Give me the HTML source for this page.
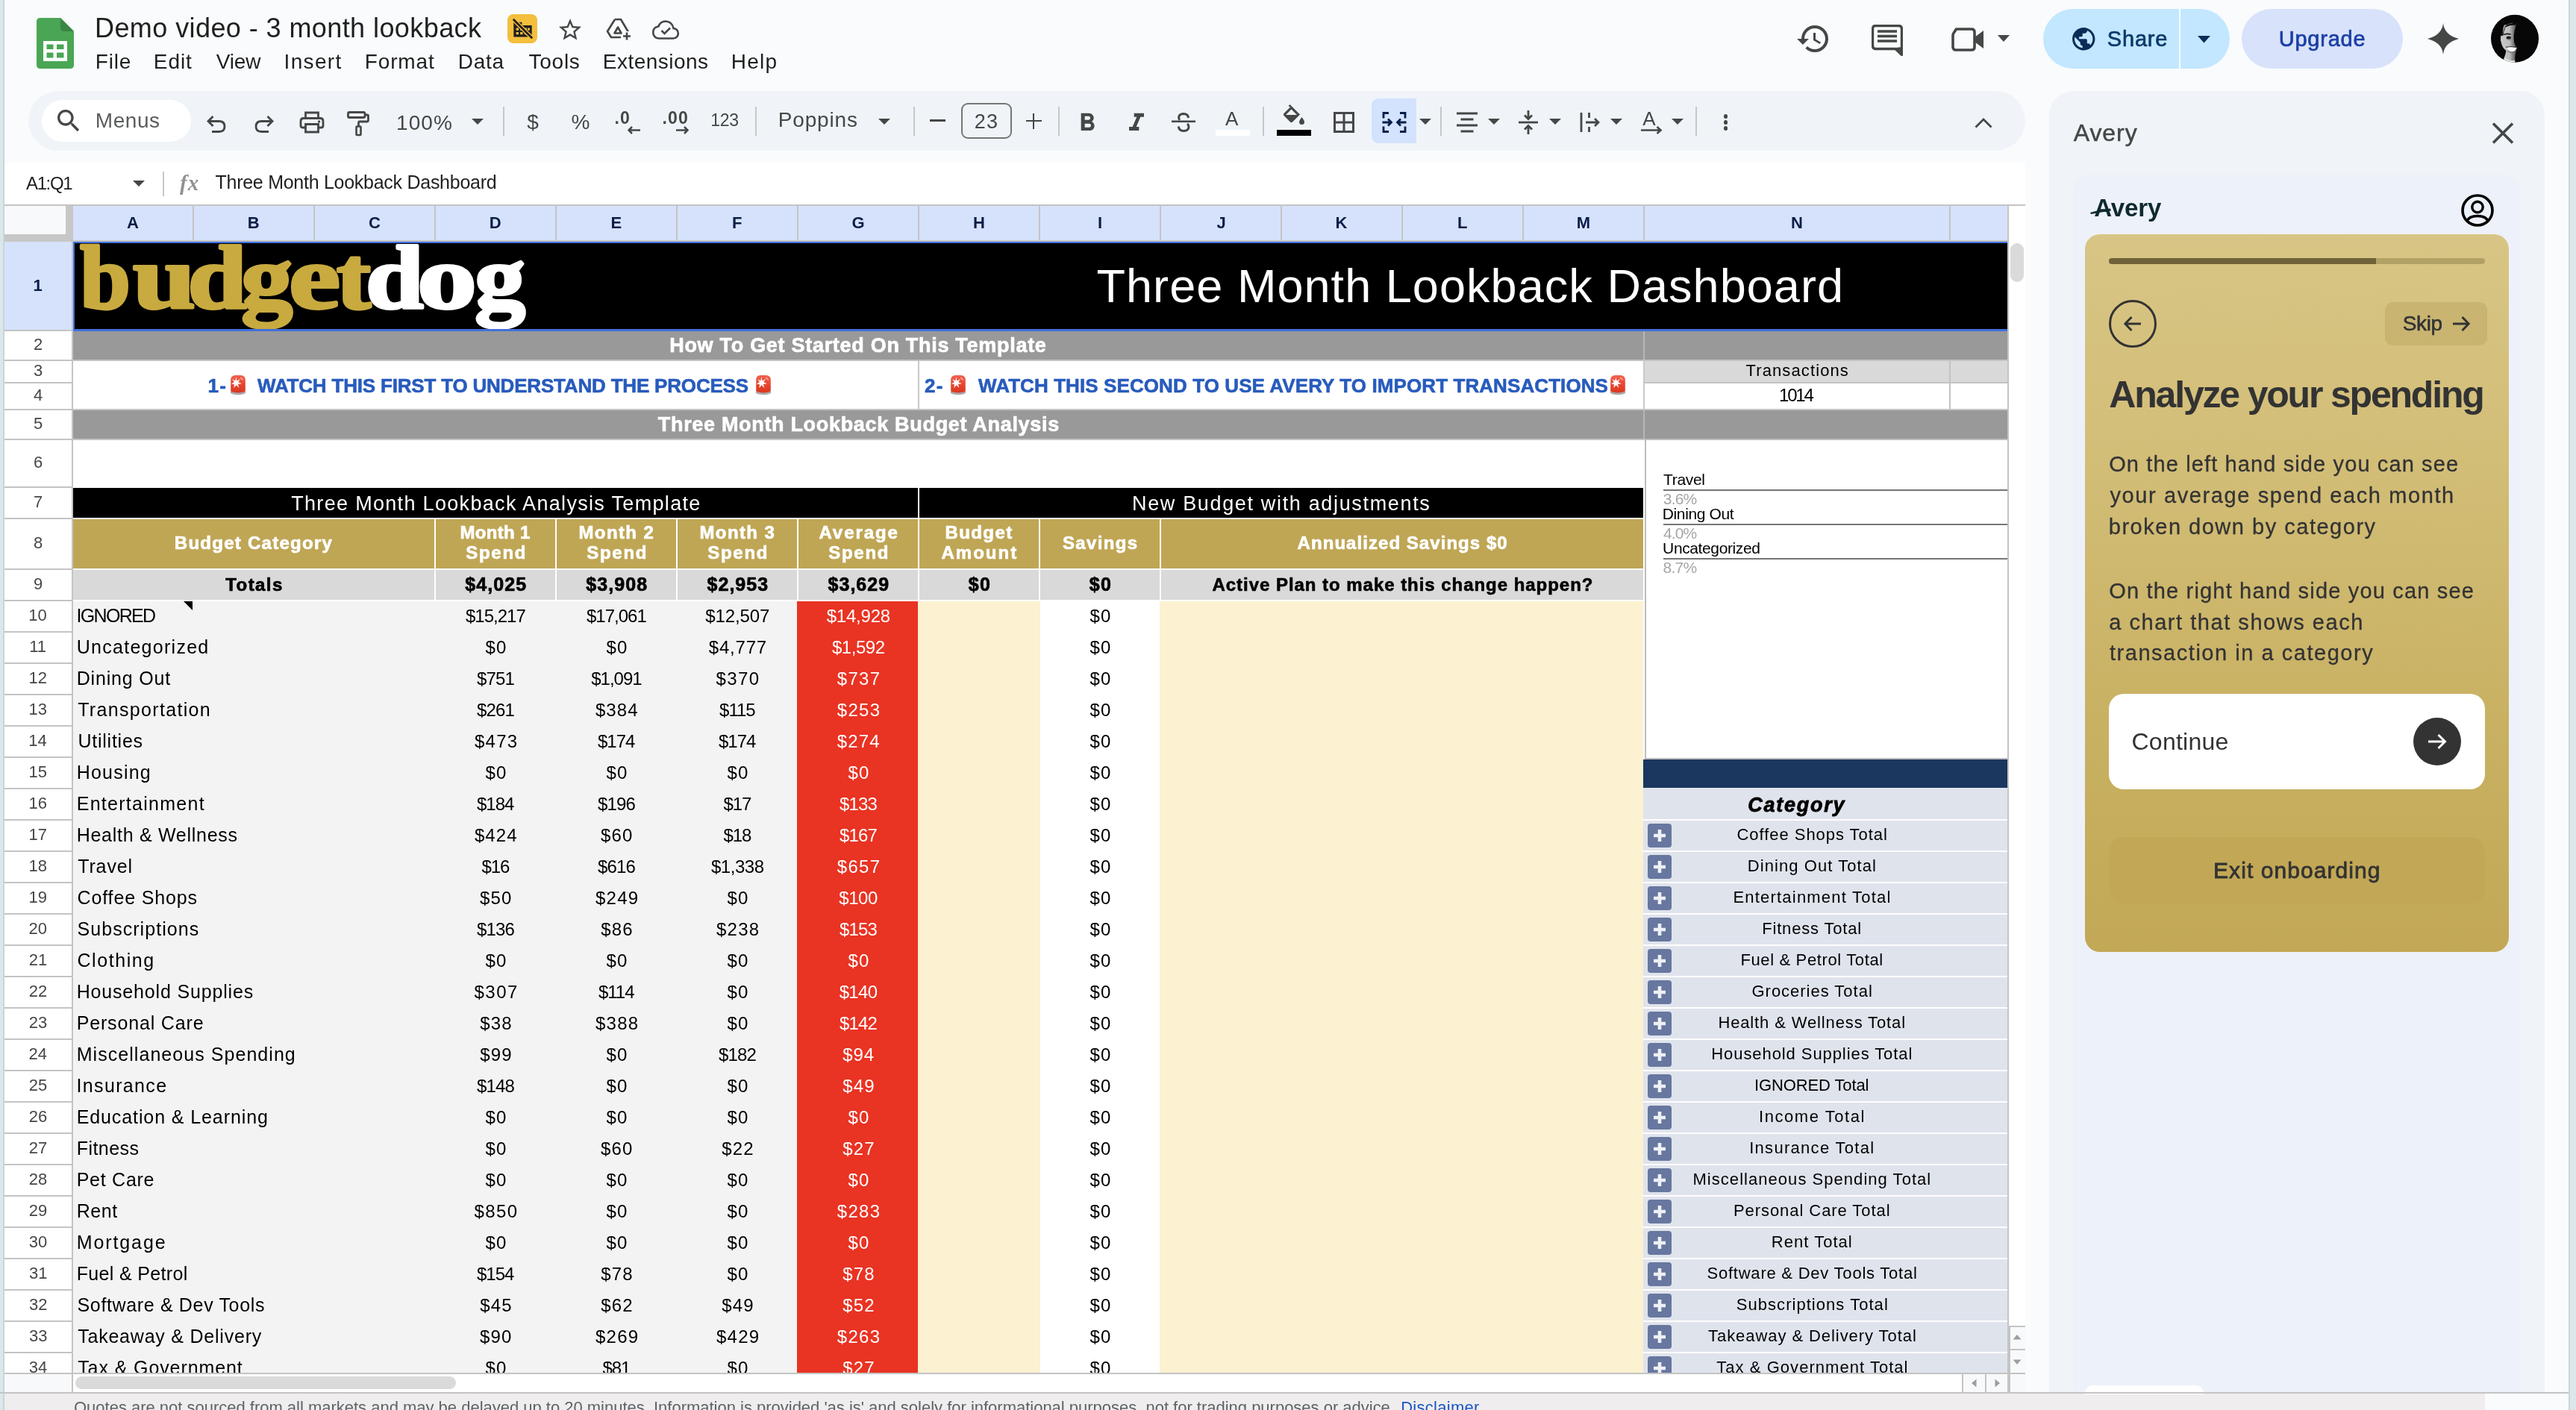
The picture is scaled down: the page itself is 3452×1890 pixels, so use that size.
<!DOCTYPE html>
<html><head><meta charset="utf-8"><title>Demo video - 3 month lookback</title>
<style>
html,body{margin:0;padding:0;}
body{width:3452px;height:1890px;overflow:hidden;background:#f9fbfd;position:relative;font-family:"Liberation Sans",sans-serif;}
#root{position:absolute;left:0;top:0;width:3452px;height:1890px;overflow:hidden;will-change:transform;}
.r{position:absolute;display:block;}
.t{position:absolute;white-space:nowrap;}
</style></head><body>
<div id="root">
<div class="r" style="left:0px;top:0px;width:4px;height:1890px;background:#dde7ea;"></div>
<div class="r" style="left:4px;top:0px;width:2px;height:1890px;background:#c6d6dd;"></div>
<div class="r" style="left:3442px;top:0px;width:2px;height:1890px;background:#c6d6dd;"></div>
<div class="r" style="left:3444px;top:0px;width:8px;height:1890px;background:#dde7ea;"></div>
<div class="r" style="left:6px;top:218px;width:2708px;height:56px;background:#fff;"></div>
<div class="r" style="left:6px;top:274px;width:2708px;height:1592px;background:#fff;"></div>
<div class="r" style="left:6px;top:274px;width:2708px;height:1566px;overflow:hidden;">
<div class="r" style="left:0px;top:0px;width:2708px;height:2px;background:#c4c4c4;"></div>
<div class="r" style="left:0px;top:2px;width:82px;height:38px;background:#f8f9fa;"></div>
<div class="r" style="left:82px;top:2px;width:10px;height:48px;background:#c7c7c7;"></div>
<div class="r" style="left:0px;top:40px;width:92px;height:10px;background:#c7c7c7;"></div>
<div class="r" style="left:92px;top:2px;width:2594px;height:46px;background:#d6e2fb;"></div>
<div class="r" style="left:92px;top:48px;width:2594px;height:2px;background:#c4c4c4;"></div>
<div class="r" style="left:252px;top:2px;width:2px;height:46px;background:#c4c4c4;"></div>
<div class="t" style="left:164.1px;top:14px;font-size:22px;line-height:22px;color:#0b1d47;font-weight:bold;">A</div>
<div class="r" style="left:414px;top:2px;width:2px;height:46px;background:#c4c4c4;"></div>
<div class="t" style="left:325.8px;top:14px;font-size:22px;line-height:22px;color:#0b1d47;font-weight:bold;">B</div>
<div class="r" style="left:576px;top:2px;width:2px;height:46px;background:#c4c4c4;"></div>
<div class="t" style="left:487.9px;top:14px;font-size:22px;line-height:22px;color:#0b1d47;font-weight:bold;">C</div>
<div class="r" style="left:738px;top:2px;width:2px;height:46px;background:#c4c4c4;"></div>
<div class="t" style="left:649.8px;top:14px;font-size:22px;line-height:22px;color:#0b1d47;font-weight:bold;">D</div>
<div class="r" style="left:900px;top:2px;width:2px;height:46px;background:#c4c4c4;"></div>
<div class="t" style="left:812.4px;top:14px;font-size:22px;line-height:22px;color:#0b1d47;font-weight:bold;">E</div>
<div class="r" style="left:1062px;top:2px;width:2px;height:46px;background:#c4c4c4;"></div>
<div class="t" style="left:974.9px;top:14px;font-size:22px;line-height:22px;color:#0b1d47;font-weight:bold;">F</div>
<div class="r" style="left:1224px;top:2px;width:2px;height:46px;background:#c4c4c4;"></div>
<div class="t" style="left:1135.6px;top:14px;font-size:22px;line-height:22px;color:#0b1d47;font-weight:bold;">G</div>
<div class="r" style="left:1386px;top:2px;width:2px;height:46px;background:#c4c4c4;"></div>
<div class="t" style="left:1298.0px;top:14px;font-size:22px;line-height:22px;color:#0b1d47;font-weight:bold;">H</div>
<div class="r" style="left:1548px;top:2px;width:2px;height:46px;background:#c4c4c4;"></div>
<div class="t" style="left:1464.9px;top:14px;font-size:22px;line-height:22px;color:#0b1d47;font-weight:bold;">I</div>
<div class="r" style="left:1710px;top:2px;width:2px;height:46px;background:#c4c4c4;"></div>
<div class="t" style="left:1624.5px;top:14px;font-size:22px;line-height:22px;color:#0b1d47;font-weight:bold;">J</div>
<div class="r" style="left:1872px;top:2px;width:2px;height:46px;background:#c4c4c4;"></div>
<div class="t" style="left:1783.5px;top:14px;font-size:22px;line-height:22px;color:#0b1d47;font-weight:bold;">K</div>
<div class="r" style="left:2034px;top:2px;width:2px;height:46px;background:#c4c4c4;"></div>
<div class="t" style="left:1946.9px;top:14px;font-size:22px;line-height:22px;color:#0b1d47;font-weight:bold;">L</div>
<div class="r" style="left:2196px;top:2px;width:2px;height:46px;background:#c4c4c4;"></div>
<div class="t" style="left:2106.8px;top:14px;font-size:22px;line-height:22px;color:#0b1d47;font-weight:bold;">M</div>
<div class="r" style="left:2606px;top:2px;width:2px;height:46px;background:#c4c4c4;"></div>
<div class="t" style="left:2394.0px;top:14px;font-size:22px;line-height:22px;color:#0b1d47;font-weight:bold;">N</div>
<div class="r" style="left:2684px;top:2px;width:2px;height:46px;background:#c4c4c4;"></div>
<div class="r" style="left:0px;top:50px;width:90px;height:1520px;background:#fff;"></div>
<div class="r" style="left:90px;top:50px;width:2px;height:1520px;background:#c4c4c4;"></div>
<div class="r" style="left:0px;top:50px;width:90px;height:118px;background:#d6e2fb;"></div>
<div class="r" style="left:0px;top:168px;width:90px;height:2px;background:#c4c4c4;"></div>
<div class="t" style="left:38.5px;top:98px;font-size:22px;line-height:22px;color:#0b1d47;font-weight:bold;">1</div>
<div class="r" style="left:0px;top:208px;width:90px;height:2px;background:#c4c4c4;"></div>
<div class="t" style="left:38.9px;top:177px;font-size:22px;line-height:22px;color:#444746;">2</div>
<div class="r" style="left:0px;top:238px;width:90px;height:2px;background:#c4c4c4;"></div>
<div class="t" style="left:39.0px;top:212px;font-size:22px;line-height:22px;color:#444746;">3</div>
<div class="r" style="left:0px;top:274px;width:90px;height:2px;background:#c4c4c4;"></div>
<div class="t" style="left:39.0px;top:245px;font-size:22px;line-height:22px;color:#444746;">4</div>
<div class="r" style="left:0px;top:314px;width:90px;height:2px;background:#c4c4c4;"></div>
<div class="t" style="left:38.9px;top:283px;font-size:22px;line-height:22px;color:#444746;">5</div>
<div class="r" style="left:0px;top:378px;width:90px;height:2px;background:#c4c4c4;"></div>
<div class="t" style="left:38.9px;top:335px;font-size:22px;line-height:22px;color:#444746;">6</div>
<div class="r" style="left:0px;top:420px;width:90px;height:2px;background:#c4c4c4;"></div>
<div class="t" style="left:38.9px;top:388px;font-size:22px;line-height:22px;color:#444746;">7</div>
<div class="r" style="left:0px;top:488px;width:90px;height:2px;background:#c4c4c4;"></div>
<div class="t" style="left:38.9px;top:443px;font-size:22px;line-height:22px;color:#444746;">8</div>
<div class="r" style="left:0px;top:530px;width:90px;height:2px;background:#c4c4c4;"></div>
<div class="t" style="left:38.9px;top:498px;font-size:22px;line-height:22px;color:#444746;">9</div>
<div class="r" style="left:0px;top:572px;width:90px;height:2px;background:#c4c4c4;"></div>
<div class="t" style="left:32.2px;top:540px;font-size:22px;line-height:22px;color:#444746;">10</div>
<div class="r" style="left:0px;top:614px;width:90px;height:2px;background:#c4c4c4;"></div>
<div class="t" style="left:33.2px;top:582px;font-size:22px;line-height:22px;color:#444746;">11</div>
<div class="r" style="left:0px;top:656px;width:90px;height:2px;background:#c4c4c4;"></div>
<div class="t" style="left:32.4px;top:624px;font-size:22px;line-height:22px;color:#444746;">12</div>
<div class="r" style="left:0px;top:698px;width:90px;height:2px;background:#c4c4c4;"></div>
<div class="t" style="left:32.4px;top:666px;font-size:22px;line-height:22px;color:#444746;">13</div>
<div class="r" style="left:0px;top:740px;width:90px;height:2px;background:#c4c4c4;"></div>
<div class="t" style="left:32.2px;top:708px;font-size:22px;line-height:22px;color:#444746;">14</div>
<div class="r" style="left:0px;top:782px;width:90px;height:2px;background:#c4c4c4;"></div>
<div class="t" style="left:32.4px;top:750px;font-size:22px;line-height:22px;color:#444746;">15</div>
<div class="r" style="left:0px;top:824px;width:90px;height:2px;background:#c4c4c4;"></div>
<div class="t" style="left:32.4px;top:792px;font-size:22px;line-height:22px;color:#444746;">16</div>
<div class="r" style="left:0px;top:866px;width:90px;height:2px;background:#c4c4c4;"></div>
<div class="t" style="left:32.4px;top:834px;font-size:22px;line-height:22px;color:#444746;">17</div>
<div class="r" style="left:0px;top:908px;width:90px;height:2px;background:#c4c4c4;"></div>
<div class="t" style="left:32.4px;top:876px;font-size:22px;line-height:22px;color:#444746;">18</div>
<div class="r" style="left:0px;top:950px;width:90px;height:2px;background:#c4c4c4;"></div>
<div class="t" style="left:32.4px;top:918px;font-size:22px;line-height:22px;color:#444746;">19</div>
<div class="r" style="left:0px;top:992px;width:90px;height:2px;background:#c4c4c4;"></div>
<div class="t" style="left:32.6px;top:960px;font-size:22px;line-height:22px;color:#444746;">20</div>
<div class="r" style="left:0px;top:1034px;width:90px;height:2px;background:#c4c4c4;"></div>
<div class="t" style="left:32.8px;top:1002px;font-size:22px;line-height:22px;color:#444746;">21</div>
<div class="r" style="left:0px;top:1076px;width:90px;height:2px;background:#c4c4c4;"></div>
<div class="t" style="left:32.8px;top:1044px;font-size:22px;line-height:22px;color:#444746;">22</div>
<div class="r" style="left:0px;top:1118px;width:90px;height:2px;background:#c4c4c4;"></div>
<div class="t" style="left:32.8px;top:1086px;font-size:22px;line-height:22px;color:#444746;">23</div>
<div class="r" style="left:0px;top:1160px;width:90px;height:2px;background:#c4c4c4;"></div>
<div class="t" style="left:32.6px;top:1128px;font-size:22px;line-height:22px;color:#444746;">24</div>
<div class="r" style="left:0px;top:1202px;width:90px;height:2px;background:#c4c4c4;"></div>
<div class="t" style="left:32.8px;top:1170px;font-size:22px;line-height:22px;color:#444746;">25</div>
<div class="r" style="left:0px;top:1244px;width:90px;height:2px;background:#c4c4c4;"></div>
<div class="t" style="left:32.8px;top:1212px;font-size:22px;line-height:22px;color:#444746;">26</div>
<div class="r" style="left:0px;top:1286px;width:90px;height:2px;background:#c4c4c4;"></div>
<div class="t" style="left:32.8px;top:1254px;font-size:22px;line-height:22px;color:#444746;">27</div>
<div class="r" style="left:0px;top:1328px;width:90px;height:2px;background:#c4c4c4;"></div>
<div class="t" style="left:32.8px;top:1296px;font-size:22px;line-height:22px;color:#444746;">28</div>
<div class="r" style="left:0px;top:1370px;width:90px;height:2px;background:#c4c4c4;"></div>
<div class="t" style="left:32.8px;top:1338px;font-size:22px;line-height:22px;color:#444746;">29</div>
<div class="r" style="left:0px;top:1412px;width:90px;height:2px;background:#c4c4c4;"></div>
<div class="t" style="left:32.8px;top:1380px;font-size:22px;line-height:22px;color:#444746;">30</div>
<div class="r" style="left:0px;top:1454px;width:90px;height:2px;background:#c4c4c4;"></div>
<div class="t" style="left:32.9px;top:1422px;font-size:22px;line-height:22px;color:#444746;">31</div>
<div class="r" style="left:0px;top:1496px;width:90px;height:2px;background:#c4c4c4;"></div>
<div class="t" style="left:32.9px;top:1464px;font-size:22px;line-height:22px;color:#444746;">32</div>
<div class="r" style="left:0px;top:1538px;width:90px;height:2px;background:#c4c4c4;"></div>
<div class="t" style="left:32.9px;top:1506px;font-size:22px;line-height:22px;color:#444746;">33</div>
<div class="r" style="left:0px;top:1580px;width:90px;height:2px;background:#c4c4c4;"></div>
<div class="t" style="left:32.8px;top:1548px;font-size:22px;line-height:22px;color:#444746;">34</div>
<div class="r" style="left:0px;top:1622px;width:90px;height:2px;background:#c4c4c4;"></div>
<div class="t" style="left:32.9px;top:1590px;font-size:22px;line-height:22px;color:#444746;">35</div>
<div class="r" style="left:92px;top:50px;width:2592px;height:120px;background:#000;"></div>
<div class="r" style="left:92px;top:170px;width:2592px;height:38px;background:#999999;"></div>
<div class="r" style="left:92px;top:208px;width:2592px;height:2px;background:#c3c3c3;"></div>
<div class="r" style="left:2196px;top:170px;width:2px;height:38px;background:#b7b7b7;"></div>
<div class="r" style="left:92px;top:276px;width:2592px;height:38px;background:#999999;"></div>
<div class="r" style="left:92px;top:314px;width:2592px;height:2px;background:#c3c3c3;"></div>
<div class="r" style="left:2196px;top:276px;width:2px;height:38px;background:#b7b7b7;"></div>
<div class="r" style="left:92px;top:274px;width:2592px;height:2px;background:#c3c3c3;"></div>
<div class="r" style="left:1224px;top:210px;width:2px;height:64px;background:#c9c9c9;"></div>
<div class="r" style="left:2196px;top:210px;width:2px;height:64px;background:#c9c9c9;"></div>
<div class="r" style="left:2198px;top:210px;width:486px;height:28px;background:#d9d9d9;"></div>
<div class="r" style="left:2198px;top:238px;width:486px;height:2px;background:#c3c3c3;"></div>
<div class="r" style="left:2606px;top:210px;width:2px;height:64px;background:#c3c3c3;"></div>
<div class="r" style="left:92px;top:380px;width:1132px;height:40px;background:#000;"></div>
<div class="r" style="left:1226px;top:380px;width:970px;height:40px;background:#000;"></div>
<div class="r" style="left:92px;top:422px;width:484px;height:66px;background:#bfa655;"></div>
<div class="r" style="left:578px;top:422px;width:160px;height:66px;background:#bfa655;"></div>
<div class="r" style="left:740px;top:422px;width:160px;height:66px;background:#bfa655;"></div>
<div class="r" style="left:902px;top:422px;width:160px;height:66px;background:#bfa655;"></div>
<div class="r" style="left:1064px;top:422px;width:160px;height:66px;background:#bfa655;"></div>
<div class="r" style="left:1226px;top:422px;width:160px;height:66px;background:#bfa655;"></div>
<div class="r" style="left:1388px;top:422px;width:160px;height:66px;background:#bfa655;"></div>
<div class="r" style="left:1550px;top:422px;width:646px;height:66px;background:#bfa655;"></div>
<div class="r" style="left:92px;top:490px;width:484px;height:40px;background:#d9d9d9;"></div>
<div class="r" style="left:578px;top:490px;width:160px;height:40px;background:#d9d9d9;"></div>
<div class="r" style="left:740px;top:490px;width:160px;height:40px;background:#d9d9d9;"></div>
<div class="r" style="left:902px;top:490px;width:160px;height:40px;background:#d9d9d9;"></div>
<div class="r" style="left:1064px;top:490px;width:160px;height:40px;background:#d9d9d9;"></div>
<div class="r" style="left:1226px;top:490px;width:160px;height:40px;background:#d9d9d9;"></div>
<div class="r" style="left:1388px;top:490px;width:160px;height:40px;background:#d9d9d9;"></div>
<div class="r" style="left:1550px;top:490px;width:646px;height:40px;background:#d9d9d9;"></div>
<div class="r" style="left:92px;top:532px;width:970px;height:1100px;background:#f3f3f3;"></div>
<div class="r" style="left:1062px;top:532px;width:162px;height:1100px;background:#e93323;"></div>
<div class="r" style="left:1224px;top:532px;width:164px;height:1100px;background:#fcf1d0;"></div>
<div class="r" style="left:1548px;top:532px;width:648px;height:1100px;background:#fcf1d0;"></div>
<div class="t" style="left:891.2px;top:176px;font-size:27px;line-height:27px;color:#fff;letter-spacing:0.71px;font-weight:bold;-webkit-text-stroke:0.7px #fff;">How To Get Started On This Template</div>
<div class="t" style="left:875.8px;top:282px;font-size:27px;line-height:27px;color:#fff;letter-spacing:0.68px;font-weight:bold;-webkit-text-stroke:0.7px #fff;">Three Month Lookback Budget Analysis</div>
<div class="t" style="left:272.5px;top:230px;font-size:26px;line-height:26px;color:#285bbd;letter-spacing:1.20px;font-weight:bold;-webkit-text-stroke:0.6px #285bbd;">1-</div>
<svg class="r" style="left:301.5px;top:227.5px" width="22" height="28" viewBox="0 0 22 28"><defs><linearGradient id="sg" x1="0" y1="0" x2="0" y2="1"><stop offset="0" stop-color="#f2624e"/><stop offset=".5" stop-color="#e84632"/><stop offset="1" stop-color="#d9381f"/></linearGradient></defs><ellipse cx="11" cy="24" rx="10.4" ry="3.2" fill="#a9a9a9"/><path d="M1.2 22.5 L1.2 7.5 Q1.2 1 7.5 1 L14.5 1 Q20.8 1 20.8 7.5 L20.8 22.5 Q11 26.5 1.2 22.5Z" fill="url(#sg)"/><path d="M8.3 3.5 L9.6 8.6 L14 6 L11.3 10.3 L16 12.3 L11 13 L12.3 18 L8.6 14.3 L5.3 18.3 L6 13.3 L1.8 12.6 L5.8 10.3 L3.3 6.3 L7.3 8.3Z" fill="#fff" opacity=".95"/><circle cx="8.4" cy="11.3" r="2.8" fill="#fff"/><path d="M14 4.5Q16.5 5 17.5 7.5" stroke="#f7b3a8" stroke-width="1.6" fill="none"/></svg>
<div class="t" style="left:339.0px;top:230px;font-size:26px;line-height:26px;color:#285bbd;letter-spacing:-0.19px;font-weight:bold;-webkit-text-stroke:0.6px #285bbd;">WATCH THIS FIRST TO UNDERSTAND THE PROCESS</div>
<svg class="r" style="left:1005.5px;top:227.5px" width="22" height="28" viewBox="0 0 22 28"><defs><linearGradient id="sg" x1="0" y1="0" x2="0" y2="1"><stop offset="0" stop-color="#f2624e"/><stop offset=".5" stop-color="#e84632"/><stop offset="1" stop-color="#d9381f"/></linearGradient></defs><ellipse cx="11" cy="24" rx="10.4" ry="3.2" fill="#a9a9a9"/><path d="M1.2 22.5 L1.2 7.5 Q1.2 1 7.5 1 L14.5 1 Q20.8 1 20.8 7.5 L20.8 22.5 Q11 26.5 1.2 22.5Z" fill="url(#sg)"/><path d="M8.3 3.5 L9.6 8.6 L14 6 L11.3 10.3 L16 12.3 L11 13 L12.3 18 L8.6 14.3 L5.3 18.3 L6 13.3 L1.8 12.6 L5.8 10.3 L3.3 6.3 L7.3 8.3Z" fill="#fff" opacity=".95"/><circle cx="8.4" cy="11.3" r="2.8" fill="#fff"/><path d="M14 4.5Q16.5 5 17.5 7.5" stroke="#f7b3a8" stroke-width="1.6" fill="none"/></svg>
<div class="t" style="left:1233.0px;top:230px;font-size:26px;line-height:26px;color:#285bbd;letter-spacing:1.20px;font-weight:bold;-webkit-text-stroke:0.6px #285bbd;">2-</div>
<svg class="r" style="left:1267px;top:227.5px" width="22" height="28" viewBox="0 0 22 28"><defs><linearGradient id="sg" x1="0" y1="0" x2="0" y2="1"><stop offset="0" stop-color="#f2624e"/><stop offset=".5" stop-color="#e84632"/><stop offset="1" stop-color="#d9381f"/></linearGradient></defs><ellipse cx="11" cy="24" rx="10.4" ry="3.2" fill="#a9a9a9"/><path d="M1.2 22.5 L1.2 7.5 Q1.2 1 7.5 1 L14.5 1 Q20.8 1 20.8 7.5 L20.8 22.5 Q11 26.5 1.2 22.5Z" fill="url(#sg)"/><path d="M8.3 3.5 L9.6 8.6 L14 6 L11.3 10.3 L16 12.3 L11 13 L12.3 18 L8.6 14.3 L5.3 18.3 L6 13.3 L1.8 12.6 L5.8 10.3 L3.3 6.3 L7.3 8.3Z" fill="#fff" opacity=".95"/><circle cx="8.4" cy="11.3" r="2.8" fill="#fff"/><path d="M14 4.5Q16.5 5 17.5 7.5" stroke="#f7b3a8" stroke-width="1.6" fill="none"/></svg>
<div class="t" style="left:1305.0px;top:230px;font-size:26px;line-height:26px;color:#285bbd;letter-spacing:0.09px;font-weight:bold;-webkit-text-stroke:0.6px #285bbd;">WATCH THIS SECOND TO USE AVERY TO IMPORT TRANSACTIONS</div>
<svg class="r" style="left:2151px;top:227.5px" width="22" height="28" viewBox="0 0 22 28"><defs><linearGradient id="sg" x1="0" y1="0" x2="0" y2="1"><stop offset="0" stop-color="#f2624e"/><stop offset=".5" stop-color="#e84632"/><stop offset="1" stop-color="#d9381f"/></linearGradient></defs><ellipse cx="11" cy="24" rx="10.4" ry="3.2" fill="#a9a9a9"/><path d="M1.2 22.5 L1.2 7.5 Q1.2 1 7.5 1 L14.5 1 Q20.8 1 20.8 7.5 L20.8 22.5 Q11 26.5 1.2 22.5Z" fill="url(#sg)"/><path d="M8.3 3.5 L9.6 8.6 L14 6 L11.3 10.3 L16 12.3 L11 13 L12.3 18 L8.6 14.3 L5.3 18.3 L6 13.3 L1.8 12.6 L5.8 10.3 L3.3 6.3 L7.3 8.3Z" fill="#fff" opacity=".95"/><circle cx="8.4" cy="11.3" r="2.8" fill="#fff"/><path d="M14 4.5Q16.5 5 17.5 7.5" stroke="#f7b3a8" stroke-width="1.6" fill="none"/></svg>
<div class="t" style="left:2333.5px;top:212px;font-size:22px;line-height:22px;color:#000;letter-spacing:1.11px;">Transactions</div>
<div class="t" style="left:2378.0px;top:244px;font-size:24px;line-height:24px;color:#000;letter-spacing:-2.17px;">1014</div>
<div class="t" style="left:384.2px;top:388px;font-size:27px;line-height:27px;color:#fff;letter-spacing:1.32px;">Three Month Lookback Analysis Template</div>
<div class="t" style="left:1511.0px;top:388px;font-size:27px;line-height:27px;color:#fff;letter-spacing:1.66px;">New Budget with adjustments</div>
<div class="t" style="left:227.8px;top:442px;font-size:24px;line-height:24px;color:#fff;letter-spacing:1.27px;font-weight:bold;-webkit-text-stroke:0.7px #fff;">Budget Category</div>
<div class="t" style="left:610.5px;top:428px;font-size:24px;line-height:24px;color:#fff;letter-spacing:0.33px;font-weight:bold;-webkit-text-stroke:0.7px #fff;">Month 1</div>
<div class="t" style="left:618.2px;top:455px;font-size:24px;line-height:24px;color:#fff;letter-spacing:1.75px;font-weight:bold;-webkit-text-stroke:0.7px #fff;">Spend</div>
<div class="t" style="left:769.5px;top:428px;font-size:24px;line-height:24px;color:#fff;letter-spacing:1.38px;font-weight:bold;-webkit-text-stroke:0.7px #fff;">Month 2</div>
<div class="t" style="left:780.2px;top:455px;font-size:24px;line-height:24px;color:#fff;letter-spacing:1.75px;font-weight:bold;-webkit-text-stroke:0.7px #fff;">Spend</div>
<div class="t" style="left:931.5px;top:428px;font-size:24px;line-height:24px;color:#fff;letter-spacing:1.38px;font-weight:bold;-webkit-text-stroke:0.7px #fff;">Month 3</div>
<div class="t" style="left:942.2px;top:455px;font-size:24px;line-height:24px;color:#fff;letter-spacing:1.75px;font-weight:bold;-webkit-text-stroke:0.7px #fff;">Spend</div>
<div class="t" style="left:1091.5px;top:428px;font-size:24px;line-height:24px;color:#fff;letter-spacing:1.92px;font-weight:bold;-webkit-text-stroke:0.7px #fff;">Average</div>
<div class="t" style="left:1104.2px;top:455px;font-size:24px;line-height:24px;color:#fff;letter-spacing:1.75px;font-weight:bold;-webkit-text-stroke:0.7px #fff;">Spend</div>
<div class="t" style="left:1260.5px;top:428px;font-size:24px;line-height:24px;color:#fff;letter-spacing:1.40px;font-weight:bold;-webkit-text-stroke:0.7px #fff;">Budget</div>
<div class="t" style="left:1255.5px;top:455px;font-size:24px;line-height:24px;color:#fff;letter-spacing:2.00px;font-weight:bold;-webkit-text-stroke:0.7px #fff;">Amount</div>
<div class="t" style="left:1417.9px;top:442px;font-size:24px;line-height:24px;color:#fff;letter-spacing:1.37px;font-weight:bold;-webkit-text-stroke:0.7px #fff;">Savings</div>
<div class="t" style="left:1732.6px;top:442px;font-size:24px;line-height:24px;color:#fff;letter-spacing:1.05px;font-weight:bold;-webkit-text-stroke:0.7px #fff;">Annualized Savings $0</div>
<div class="t" style="left:296.2px;top:498px;font-size:24px;line-height:24px;color:#000;letter-spacing:1.45px;font-weight:bold;-webkit-text-stroke:0.7px #000;">Totals</div>
<div class="t" style="left:617.3px;top:497px;font-size:25px;line-height:25px;color:#000;letter-spacing:1.09px;font-weight:bold;-webkit-text-stroke:0.7px #000;">$4,025</div>
<div class="t" style="left:779.3px;top:497px;font-size:25px;line-height:25px;color:#000;letter-spacing:1.09px;font-weight:bold;-webkit-text-stroke:0.7px #000;">$3,908</div>
<div class="t" style="left:941.6px;top:497px;font-size:25px;line-height:25px;color:#000;letter-spacing:1.00px;font-weight:bold;-webkit-text-stroke:0.7px #000;">$2,953</div>
<div class="t" style="left:1103.6px;top:497px;font-size:25px;line-height:25px;color:#000;letter-spacing:1.00px;font-weight:bold;-webkit-text-stroke:0.7px #000;">$3,629</div>
<div class="t" style="left:1291.8px;top:497px;font-size:25px;line-height:25px;color:#000;letter-spacing:1.20px;font-weight:bold;-webkit-text-stroke:0.7px #000;">$0</div>
<div class="t" style="left:1453.8px;top:497px;font-size:25px;line-height:25px;color:#000;letter-spacing:1.20px;font-weight:bold;-webkit-text-stroke:0.7px #000;">$0</div>
<div class="t" style="left:1618.5px;top:498px;font-size:24px;line-height:24px;color:#000;letter-spacing:0.96px;font-weight:bold;-webkit-text-stroke:0.6px #000;">Active Plan to make this change happen?</div>
<div class="t" style="left:96.5px;top:539px;font-size:25px;line-height:25px;color:#000;letter-spacing:-1.67px;">IGNORED</div>
<div class="t" style="left:618.0px;top:540px;font-size:24px;line-height:24px;color:#000;letter-spacing:-1.00px;">$15,217</div>
<div class="t" style="left:780.0px;top:540px;font-size:24px;line-height:24px;color:#000;letter-spacing:-1.00px;">$17,061</div>
<div class="t" style="left:939.3px;top:540px;font-size:24px;line-height:24px;color:#000;letter-spacing:-0.10px;">$12,507</div>
<div class="t" style="left:1101.7px;top:540px;font-size:24px;line-height:24px;color:#fff;letter-spacing:-0.22px;">$14,928</div>
<div class="t" style="left:1454.4px;top:540px;font-size:24px;line-height:24px;color:#000;letter-spacing:1.20px;">$0</div>
<div class="t" style="left:96.7px;top:581px;font-size:25px;line-height:25px;color:#000;letter-spacing:1.28px;">Uncategorized</div>
<div class="t" style="left:644.4px;top:582px;font-size:24px;line-height:24px;color:#000;letter-spacing:1.20px;">$0</div>
<div class="t" style="left:806.4px;top:582px;font-size:24px;line-height:24px;color:#000;letter-spacing:1.20px;">$0</div>
<div class="t" style="left:943.8px;top:582px;font-size:24px;line-height:24px;color:#000;letter-spacing:0.78px;">$4,777</div>
<div class="t" style="left:1109.0px;top:582px;font-size:24px;line-height:24px;color:#fff;letter-spacing:-0.48px;">$1,592</div>
<div class="t" style="left:1454.4px;top:582px;font-size:24px;line-height:24px;color:#000;letter-spacing:1.20px;">$0</div>
<div class="t" style="left:96.7px;top:623px;font-size:25px;line-height:25px;color:#000;letter-spacing:0.81px;">Dining Out</div>
<div class="t" style="left:633.0px;top:624px;font-size:24px;line-height:24px;color:#000;letter-spacing:-0.83px;">$751</div>
<div class="t" style="left:786.2px;top:624px;font-size:24px;line-height:24px;color:#000;letter-spacing:-1.00px;">$1,091</div>
<div class="t" style="left:953.5px;top:624px;font-size:24px;line-height:24px;color:#000;letter-spacing:1.42px;">$370</div>
<div class="t" style="left:1115.8px;top:624px;font-size:24px;line-height:24px;color:#fff;letter-spacing:1.27px;">$737</div>
<div class="t" style="left:1454.4px;top:624px;font-size:24px;line-height:24px;color:#000;letter-spacing:1.20px;">$0</div>
<div class="t" style="left:98.2px;top:665px;font-size:25px;line-height:25px;color:#000;letter-spacing:1.33px;">Transportation</div>
<div class="t" style="left:633.0px;top:666px;font-size:24px;line-height:24px;color:#000;letter-spacing:-0.83px;">$261</div>
<div class="t" style="left:791.9px;top:666px;font-size:24px;line-height:24px;color:#000;letter-spacing:1.10px;">$384</div>
<div class="t" style="left:958.1px;top:666px;font-size:24px;line-height:24px;color:#000;letter-spacing:-1.00px;">$115</div>
<div class="t" style="left:1115.8px;top:666px;font-size:24px;line-height:24px;color:#fff;letter-spacing:1.27px;">$253</div>
<div class="t" style="left:1454.4px;top:666px;font-size:24px;line-height:24px;color:#000;letter-spacing:1.20px;">$0</div>
<div class="t" style="left:98.5px;top:707px;font-size:25px;line-height:25px;color:#000;letter-spacing:0.75px;">Utilities</div>
<div class="t" style="left:629.9px;top:708px;font-size:24px;line-height:24px;color:#000;letter-spacing:1.27px;">$473</div>
<div class="t" style="left:795.0px;top:708px;font-size:24px;line-height:24px;color:#000;letter-spacing:-1.00px;">$174</div>
<div class="t" style="left:957.0px;top:708px;font-size:24px;line-height:24px;color:#000;letter-spacing:-1.00px;">$174</div>
<div class="t" style="left:1115.8px;top:708px;font-size:24px;line-height:24px;color:#fff;letter-spacing:1.10px;">$274</div>
<div class="t" style="left:1454.4px;top:708px;font-size:24px;line-height:24px;color:#000;letter-spacing:1.20px;">$0</div>
<div class="t" style="left:96.7px;top:749px;font-size:25px;line-height:25px;color:#000;letter-spacing:1.22px;">Housing</div>
<div class="t" style="left:644.4px;top:750px;font-size:24px;line-height:24px;color:#000;letter-spacing:1.20px;">$0</div>
<div class="t" style="left:806.4px;top:750px;font-size:24px;line-height:24px;color:#000;letter-spacing:1.20px;">$0</div>
<div class="t" style="left:968.4px;top:750px;font-size:24px;line-height:24px;color:#000;letter-spacing:1.20px;">$0</div>
<div class="t" style="left:1130.4px;top:750px;font-size:24px;line-height:24px;color:#fff;letter-spacing:1.20px;">$0</div>
<div class="t" style="left:1454.4px;top:750px;font-size:24px;line-height:24px;color:#000;letter-spacing:1.20px;">$0</div>
<div class="t" style="left:96.7px;top:791px;font-size:25px;line-height:25px;color:#000;letter-spacing:1.28px;">Entertainment</div>
<div class="t" style="left:633.0px;top:792px;font-size:24px;line-height:24px;color:#000;letter-spacing:-1.00px;">$184</div>
<div class="t" style="left:795.0px;top:792px;font-size:24px;line-height:24px;color:#000;letter-spacing:-0.83px;">$196</div>
<div class="t" style="left:963.4px;top:792px;font-size:24px;line-height:24px;color:#000;letter-spacing:-1.00px;">$17</div>
<div class="t" style="left:1119.0px;top:792px;font-size:24px;line-height:24px;color:#fff;letter-spacing:-0.83px;">$133</div>
<div class="t" style="left:1454.4px;top:792px;font-size:24px;line-height:24px;color:#000;letter-spacing:1.20px;">$0</div>
<div class="t" style="left:96.7px;top:833px;font-size:25px;line-height:25px;color:#000;letter-spacing:0.72px;">Health &amp; Wellness</div>
<div class="t" style="left:629.9px;top:834px;font-size:24px;line-height:24px;color:#000;letter-spacing:1.10px;">$424</div>
<div class="t" style="left:799.0px;top:834px;font-size:24px;line-height:24px;color:#000;letter-spacing:1.20px;">$60</div>
<div class="t" style="left:963.4px;top:834px;font-size:24px;line-height:24px;color:#000;letter-spacing:-1.00px;">$18</div>
<div class="t" style="left:1119.0px;top:834px;font-size:24px;line-height:24px;color:#fff;letter-spacing:-0.83px;">$167</div>
<div class="t" style="left:1454.4px;top:834px;font-size:24px;line-height:24px;color:#000;letter-spacing:1.20px;">$0</div>
<div class="t" style="left:98.2px;top:875px;font-size:25px;line-height:25px;color:#000;letter-spacing:0.88px;">Travel</div>
<div class="t" style="left:639.4px;top:876px;font-size:24px;line-height:24px;color:#000;letter-spacing:-1.00px;">$16</div>
<div class="t" style="left:795.0px;top:876px;font-size:24px;line-height:24px;color:#000;letter-spacing:-0.83px;">$616</div>
<div class="t" style="left:947.0px;top:876px;font-size:24px;line-height:24px;color:#000;letter-spacing:-0.48px;">$1,338</div>
<div class="t" style="left:1115.8px;top:876px;font-size:24px;line-height:24px;color:#fff;letter-spacing:1.27px;">$657</div>
<div class="t" style="left:1454.4px;top:876px;font-size:24px;line-height:24px;color:#000;letter-spacing:1.20px;">$0</div>
<div class="t" style="left:97.5px;top:917px;font-size:25px;line-height:25px;color:#000;letter-spacing:0.87px;">Coffee Shops</div>
<div class="t" style="left:637.0px;top:918px;font-size:24px;line-height:24px;color:#000;letter-spacing:1.20px;">$50</div>
<div class="t" style="left:791.9px;top:918px;font-size:24px;line-height:24px;color:#000;letter-spacing:1.27px;">$249</div>
<div class="t" style="left:968.4px;top:918px;font-size:24px;line-height:24px;color:#000;letter-spacing:1.20px;">$0</div>
<div class="t" style="left:1118.3px;top:918px;font-size:24px;line-height:24px;color:#fff;letter-spacing:-0.45px;">$100</div>
<div class="t" style="left:1454.4px;top:918px;font-size:24px;line-height:24px;color:#000;letter-spacing:1.20px;">$0</div>
<div class="t" style="left:97.5px;top:959px;font-size:25px;line-height:25px;color:#000;letter-spacing:1.05px;">Subscriptions</div>
<div class="t" style="left:633.0px;top:960px;font-size:24px;line-height:24px;color:#000;letter-spacing:-0.83px;">$136</div>
<div class="t" style="left:799.2px;top:960px;font-size:24px;line-height:24px;color:#000;letter-spacing:1.20px;">$86</div>
<div class="t" style="left:953.9px;top:960px;font-size:24px;line-height:24px;color:#000;letter-spacing:1.27px;">$238</div>
<div class="t" style="left:1119.0px;top:960px;font-size:24px;line-height:24px;color:#fff;letter-spacing:-0.83px;">$153</div>
<div class="t" style="left:1454.4px;top:960px;font-size:24px;line-height:24px;color:#000;letter-spacing:1.20px;">$0</div>
<div class="t" style="left:97.5px;top:1001px;font-size:25px;line-height:25px;color:#000;letter-spacing:1.56px;">Clothing</div>
<div class="t" style="left:644.4px;top:1002px;font-size:24px;line-height:24px;color:#000;letter-spacing:1.20px;">$0</div>
<div class="t" style="left:806.4px;top:1002px;font-size:24px;line-height:24px;color:#000;letter-spacing:1.20px;">$0</div>
<div class="t" style="left:968.4px;top:1002px;font-size:24px;line-height:24px;color:#000;letter-spacing:1.20px;">$0</div>
<div class="t" style="left:1130.4px;top:1002px;font-size:24px;line-height:24px;color:#fff;letter-spacing:1.20px;">$0</div>
<div class="t" style="left:1454.4px;top:1002px;font-size:24px;line-height:24px;color:#000;letter-spacing:1.20px;">$0</div>
<div class="t" style="left:96.7px;top:1043px;font-size:25px;line-height:25px;color:#000;letter-spacing:0.83px;">Household Supplies</div>
<div class="t" style="left:629.5px;top:1044px;font-size:24px;line-height:24px;color:#000;letter-spacing:1.50px;">$307</div>
<div class="t" style="left:795.9px;top:1044px;font-size:24px;line-height:24px;color:#000;letter-spacing:-1.00px;">$114</div>
<div class="t" style="left:968.4px;top:1044px;font-size:24px;line-height:24px;color:#000;letter-spacing:1.20px;">$0</div>
<div class="t" style="left:1118.7px;top:1044px;font-size:24px;line-height:24px;color:#fff;letter-spacing:-0.68px;">$140</div>
<div class="t" style="left:1454.4px;top:1044px;font-size:24px;line-height:24px;color:#000;letter-spacing:1.20px;">$0</div>
<div class="t" style="left:96.7px;top:1085px;font-size:25px;line-height:25px;color:#000;letter-spacing:0.84px;">Personal Care</div>
<div class="t" style="left:637.2px;top:1086px;font-size:24px;line-height:24px;color:#000;letter-spacing:1.20px;">$38</div>
<div class="t" style="left:791.9px;top:1086px;font-size:24px;line-height:24px;color:#000;letter-spacing:1.27px;">$388</div>
<div class="t" style="left:968.4px;top:1086px;font-size:24px;line-height:24px;color:#000;letter-spacing:1.20px;">$0</div>
<div class="t" style="left:1119.0px;top:1086px;font-size:24px;line-height:24px;color:#fff;letter-spacing:-0.83px;">$142</div>
<div class="t" style="left:1454.4px;top:1086px;font-size:24px;line-height:24px;color:#000;letter-spacing:1.20px;">$0</div>
<div class="t" style="left:96.7px;top:1127px;font-size:25px;line-height:25px;color:#000;letter-spacing:1.05px;">Miscellaneous Spending</div>
<div class="t" style="left:637.2px;top:1128px;font-size:24px;line-height:24px;color:#000;letter-spacing:1.20px;">$99</div>
<div class="t" style="left:806.4px;top:1128px;font-size:24px;line-height:24px;color:#000;letter-spacing:1.20px;">$0</div>
<div class="t" style="left:957.0px;top:1128px;font-size:24px;line-height:24px;color:#000;letter-spacing:-0.83px;">$182</div>
<div class="t" style="left:1123.2px;top:1128px;font-size:24px;line-height:24px;color:#fff;letter-spacing:0.98px;">$94</div>
<div class="t" style="left:1454.4px;top:1128px;font-size:24px;line-height:24px;color:#000;letter-spacing:1.20px;">$0</div>
<div class="t" style="left:96.5px;top:1169px;font-size:25px;line-height:25px;color:#000;letter-spacing:1.35px;">Insurance</div>
<div class="t" style="left:633.0px;top:1170px;font-size:24px;line-height:24px;color:#000;letter-spacing:-0.83px;">$148</div>
<div class="t" style="left:806.4px;top:1170px;font-size:24px;line-height:24px;color:#000;letter-spacing:1.20px;">$0</div>
<div class="t" style="left:968.4px;top:1170px;font-size:24px;line-height:24px;color:#000;letter-spacing:1.20px;">$0</div>
<div class="t" style="left:1123.2px;top:1170px;font-size:24px;line-height:24px;color:#fff;letter-spacing:1.20px;">$49</div>
<div class="t" style="left:1454.4px;top:1170px;font-size:24px;line-height:24px;color:#000;letter-spacing:1.20px;">$0</div>
<div class="t" style="left:96.7px;top:1211px;font-size:25px;line-height:25px;color:#000;letter-spacing:0.90px;">Education &amp; Learning</div>
<div class="t" style="left:644.4px;top:1212px;font-size:24px;line-height:24px;color:#000;letter-spacing:1.20px;">$0</div>
<div class="t" style="left:806.4px;top:1212px;font-size:24px;line-height:24px;color:#000;letter-spacing:1.20px;">$0</div>
<div class="t" style="left:968.4px;top:1212px;font-size:24px;line-height:24px;color:#000;letter-spacing:1.20px;">$0</div>
<div class="t" style="left:1130.4px;top:1212px;font-size:24px;line-height:24px;color:#fff;letter-spacing:1.20px;">$0</div>
<div class="t" style="left:1454.4px;top:1212px;font-size:24px;line-height:24px;color:#000;letter-spacing:1.20px;">$0</div>
<div class="t" style="left:96.7px;top:1253px;font-size:25px;line-height:25px;color:#000;letter-spacing:0.47px;">Fitness</div>
<div class="t" style="left:644.4px;top:1254px;font-size:24px;line-height:24px;color:#000;letter-spacing:1.20px;">$0</div>
<div class="t" style="left:799.0px;top:1254px;font-size:24px;line-height:24px;color:#000;letter-spacing:1.20px;">$60</div>
<div class="t" style="left:961.2px;top:1254px;font-size:24px;line-height:24px;color:#000;letter-spacing:1.20px;">$22</div>
<div class="t" style="left:1123.2px;top:1254px;font-size:24px;line-height:24px;color:#fff;letter-spacing:1.20px;">$27</div>
<div class="t" style="left:1454.4px;top:1254px;font-size:24px;line-height:24px;color:#000;letter-spacing:1.20px;">$0</div>
<div class="t" style="left:96.7px;top:1295px;font-size:25px;line-height:25px;color:#000;letter-spacing:0.74px;">Pet Care</div>
<div class="t" style="left:644.4px;top:1296px;font-size:24px;line-height:24px;color:#000;letter-spacing:1.20px;">$0</div>
<div class="t" style="left:806.4px;top:1296px;font-size:24px;line-height:24px;color:#000;letter-spacing:1.20px;">$0</div>
<div class="t" style="left:968.4px;top:1296px;font-size:24px;line-height:24px;color:#000;letter-spacing:1.20px;">$0</div>
<div class="t" style="left:1130.4px;top:1296px;font-size:24px;line-height:24px;color:#fff;letter-spacing:1.20px;">$0</div>
<div class="t" style="left:1454.4px;top:1296px;font-size:24px;line-height:24px;color:#000;letter-spacing:1.20px;">$0</div>
<div class="t" style="left:96.7px;top:1337px;font-size:25px;line-height:25px;color:#000;letter-spacing:0.60px;">Rent</div>
<div class="t" style="left:629.5px;top:1338px;font-size:24px;line-height:24px;color:#000;letter-spacing:1.42px;">$850</div>
<div class="t" style="left:806.4px;top:1338px;font-size:24px;line-height:24px;color:#000;letter-spacing:1.20px;">$0</div>
<div class="t" style="left:968.4px;top:1338px;font-size:24px;line-height:24px;color:#000;letter-spacing:1.20px;">$0</div>
<div class="t" style="left:1115.8px;top:1338px;font-size:24px;line-height:24px;color:#fff;letter-spacing:1.27px;">$283</div>
<div class="t" style="left:1454.4px;top:1338px;font-size:24px;line-height:24px;color:#000;letter-spacing:1.20px;">$0</div>
<div class="t" style="left:96.7px;top:1379px;font-size:25px;line-height:25px;color:#000;letter-spacing:1.90px;">Mortgage</div>
<div class="t" style="left:644.4px;top:1380px;font-size:24px;line-height:24px;color:#000;letter-spacing:1.20px;">$0</div>
<div class="t" style="left:806.4px;top:1380px;font-size:24px;line-height:24px;color:#000;letter-spacing:1.20px;">$0</div>
<div class="t" style="left:968.4px;top:1380px;font-size:24px;line-height:24px;color:#000;letter-spacing:1.20px;">$0</div>
<div class="t" style="left:1130.4px;top:1380px;font-size:24px;line-height:24px;color:#fff;letter-spacing:1.20px;">$0</div>
<div class="t" style="left:1454.4px;top:1380px;font-size:24px;line-height:24px;color:#000;letter-spacing:1.20px;">$0</div>
<div class="t" style="left:96.7px;top:1421px;font-size:25px;line-height:25px;color:#000;letter-spacing:0.34px;">Fuel &amp; Petrol</div>
<div class="t" style="left:633.0px;top:1422px;font-size:24px;line-height:24px;color:#000;letter-spacing:-1.00px;">$154</div>
<div class="t" style="left:799.2px;top:1422px;font-size:24px;line-height:24px;color:#000;letter-spacing:1.20px;">$78</div>
<div class="t" style="left:968.4px;top:1422px;font-size:24px;line-height:24px;color:#000;letter-spacing:1.20px;">$0</div>
<div class="t" style="left:1123.2px;top:1422px;font-size:24px;line-height:24px;color:#fff;letter-spacing:1.20px;">$78</div>
<div class="t" style="left:1454.4px;top:1422px;font-size:24px;line-height:24px;color:#000;letter-spacing:1.20px;">$0</div>
<div class="t" style="left:97.5px;top:1463px;font-size:25px;line-height:25px;color:#000;letter-spacing:0.65px;">Software &amp; Dev Tools</div>
<div class="t" style="left:637.2px;top:1464px;font-size:24px;line-height:24px;color:#000;letter-spacing:1.20px;">$45</div>
<div class="t" style="left:799.2px;top:1464px;font-size:24px;line-height:24px;color:#000;letter-spacing:1.20px;">$62</div>
<div class="t" style="left:961.2px;top:1464px;font-size:24px;line-height:24px;color:#000;letter-spacing:1.20px;">$49</div>
<div class="t" style="left:1123.2px;top:1464px;font-size:24px;line-height:24px;color:#fff;letter-spacing:1.20px;">$52</div>
<div class="t" style="left:1454.4px;top:1464px;font-size:24px;line-height:24px;color:#000;letter-spacing:1.20px;">$0</div>
<div class="t" style="left:98.2px;top:1505px;font-size:25px;line-height:25px;color:#000;letter-spacing:0.78px;">Takeaway &amp; Delivery</div>
<div class="t" style="left:637.0px;top:1506px;font-size:24px;line-height:24px;color:#000;letter-spacing:1.20px;">$90</div>
<div class="t" style="left:791.9px;top:1506px;font-size:24px;line-height:24px;color:#000;letter-spacing:1.27px;">$269</div>
<div class="t" style="left:953.9px;top:1506px;font-size:24px;line-height:24px;color:#000;letter-spacing:1.27px;">$429</div>
<div class="t" style="left:1115.8px;top:1506px;font-size:24px;line-height:24px;color:#fff;letter-spacing:1.27px;">$263</div>
<div class="t" style="left:1454.4px;top:1506px;font-size:24px;line-height:24px;color:#000;letter-spacing:1.20px;">$0</div>
<div class="t" style="left:98.2px;top:1547px;font-size:25px;line-height:25px;color:#000;letter-spacing:0.90px;">Tax &amp; Government</div>
<div class="t" style="left:644.4px;top:1548px;font-size:24px;line-height:24px;color:#000;letter-spacing:1.20px;">$0</div>
<div class="t" style="left:801.4px;top:1548px;font-size:24px;line-height:24px;color:#000;letter-spacing:-1.00px;">$81</div>
<div class="t" style="left:968.4px;top:1548px;font-size:24px;line-height:24px;color:#000;letter-spacing:1.20px;">$0</div>
<div class="t" style="left:1123.2px;top:1548px;font-size:24px;line-height:24px;color:#fff;letter-spacing:1.20px;">$27</div>
<div class="t" style="left:1454.4px;top:1548px;font-size:24px;line-height:24px;color:#000;letter-spacing:1.20px;">$0</div>
<svg class="r" style="left:240px;top:532px" width="12" height="12"><path d="M0 0H12V12Z" fill="#000"/></svg>
<div class="r" style="left:2198px;top:314px;width:488px;height:430px;background:#bdbdbd;"></div>
<div class="r" style="left:2200px;top:316px;width:484px;height:426px;background:#fff;"></div>
<div class="t" style="left:2223.1px;top:358px;font-size:21px;line-height:21px;color:#000;letter-spacing:-0.35px;">Travel</div>
<div class="r" style="left:2223px;top:381.6px;width:461px;height:2px;background:#767676;"></div>
<div class="t" style="left:2222.8px;top:384px;font-size:21px;line-height:21px;color:#a6a6a6;letter-spacing:-0.83px;">3.6%</div>
<div class="t" style="left:2221.8px;top:404px;font-size:21px;line-height:21px;color:#000;letter-spacing:-0.39px;">Dining Out</div>
<div class="r" style="left:2223px;top:427.6px;width:461px;height:2px;background:#767676;"></div>
<div class="t" style="left:2223.1px;top:430px;font-size:21px;line-height:21px;color:#a6a6a6;letter-spacing:-0.92px;">4.0%</div>
<div class="t" style="left:2222.1px;top:450px;font-size:21px;line-height:21px;color:#000;letter-spacing:-0.38px;">Uncategorized</div>
<div class="r" style="left:2223px;top:473.6px;width:461px;height:2px;background:#767676;"></div>
<div class="t" style="left:2222.6px;top:476px;font-size:21px;line-height:21px;color:#a6a6a6;letter-spacing:-0.75px;">8.7%</div>
<div class="r" style="left:2196px;top:744px;width:488px;height:38px;background:#1b365f;"></div>
<div class="r" style="left:2196px;top:782px;width:488px;height:800px;background:#dfe3ec;"></div>
<div class="r" style="left:2684px;top:742px;width:2px;height:830px;background:#c4c4c4;"></div>
<div class="r" style="left:2196px;top:823.5999999999999px;width:488px;height:2.4px;background:#fff;"></div>
<div class="r" style="left:2196px;top:865.5999999999999px;width:488px;height:2.4px;background:#fff;"></div>
<div class="r" style="left:2196px;top:907.5999999999999px;width:488px;height:2.4px;background:#fff;"></div>
<div class="r" style="left:2196px;top:949.5999999999999px;width:488px;height:2.4px;background:#fff;"></div>
<div class="r" style="left:2196px;top:991.5999999999999px;width:488px;height:2.4px;background:#fff;"></div>
<div class="r" style="left:2196px;top:1033.6px;width:488px;height:2.4px;background:#fff;"></div>
<div class="r" style="left:2196px;top:1075.6px;width:488px;height:2.4px;background:#fff;"></div>
<div class="r" style="left:2196px;top:1117.6px;width:488px;height:2.4px;background:#fff;"></div>
<div class="r" style="left:2196px;top:1159.6px;width:488px;height:2.4px;background:#fff;"></div>
<div class="r" style="left:2196px;top:1201.6px;width:488px;height:2.4px;background:#fff;"></div>
<div class="r" style="left:2196px;top:1243.6px;width:488px;height:2.4px;background:#fff;"></div>
<div class="r" style="left:2196px;top:1285.6px;width:488px;height:2.4px;background:#fff;"></div>
<div class="r" style="left:2196px;top:1327.6px;width:488px;height:2.4px;background:#fff;"></div>
<div class="r" style="left:2196px;top:1369.6px;width:488px;height:2.4px;background:#fff;"></div>
<div class="r" style="left:2196px;top:1411.6px;width:488px;height:2.4px;background:#fff;"></div>
<div class="r" style="left:2196px;top:1453.6px;width:488px;height:2.4px;background:#fff;"></div>
<div class="r" style="left:2196px;top:1495.6px;width:488px;height:2.4px;background:#fff;"></div>
<div class="r" style="left:2196px;top:1537.6px;width:488px;height:2.4px;background:#fff;"></div>
<div class="r" style="left:2196px;top:1579.6px;width:488px;height:2.4px;background:#fff;"></div>
<div class="t" style="left:2336.2px;top:792px;font-size:27px;line-height:27px;color:#000;letter-spacing:1.75px;font-weight:bold;font-style:italic;-webkit-text-stroke:0.8px #000;">Category</div>
<div class="t" style="left:2321.5px;top:834px;font-size:22px;line-height:22px;color:#000;letter-spacing:0.96px;">Coffee Shops Total</div>
<svg class="r" style="left:2202px;top:830px" width="32" height="32"><rect width="32" height="32" rx="4" fill="#67779f"/><path d="M8 16H24M16 8V24" stroke="#eef0f6" stroke-width="4.6"/></svg>
<div class="t" style="left:2335.8px;top:876px;font-size:22px;line-height:22px;color:#000;letter-spacing:1.07px;">Dining Out Total</div>
<svg class="r" style="left:2202px;top:872px" width="32" height="32"><rect width="32" height="32" rx="4" fill="#67779f"/><path d="M8 16H24M16 8V24" stroke="#eef0f6" stroke-width="4.6"/></svg>
<div class="t" style="left:2316.4px;top:918px;font-size:22px;line-height:22px;color:#000;letter-spacing:1.21px;">Entertainment Total</div>
<svg class="r" style="left:2202px;top:914px" width="32" height="32"><rect width="32" height="32" rx="4" fill="#67779f"/><path d="M8 16H24M16 8V24" stroke="#eef0f6" stroke-width="4.6"/></svg>
<div class="t" style="left:2355.2px;top:960px;font-size:22px;line-height:22px;color:#000;letter-spacing:0.83px;">Fitness Total</div>
<svg class="r" style="left:2202px;top:956px" width="32" height="32"><rect width="32" height="32" rx="4" fill="#67779f"/><path d="M8 16H24M16 8V24" stroke="#eef0f6" stroke-width="4.6"/></svg>
<div class="t" style="left:2326.4px;top:1002px;font-size:22px;line-height:22px;color:#000;letter-spacing:0.64px;">Fuel &amp; Petrol Total</div>
<svg class="r" style="left:2202px;top:998px" width="32" height="32"><rect width="32" height="32" rx="4" fill="#67779f"/><path d="M8 16H24M16 8V24" stroke="#eef0f6" stroke-width="4.6"/></svg>
<div class="t" style="left:2341.5px;top:1044px;font-size:22px;line-height:22px;color:#000;letter-spacing:0.98px;">Groceries Total</div>
<svg class="r" style="left:2202px;top:1040px" width="32" height="32"><rect width="32" height="32" rx="4" fill="#67779f"/><path d="M8 16H24M16 8V24" stroke="#eef0f6" stroke-width="4.6"/></svg>
<div class="t" style="left:2296.4px;top:1086px;font-size:22px;line-height:22px;color:#000;letter-spacing:0.87px;">Health &amp; Wellness Total</div>
<svg class="r" style="left:2202px;top:1082px" width="32" height="32"><rect width="32" height="32" rx="4" fill="#67779f"/><path d="M8 16H24M16 8V24" stroke="#eef0f6" stroke-width="4.6"/></svg>
<div class="t" style="left:2287.3px;top:1128px;font-size:22px;line-height:22px;color:#000;letter-spacing:0.92px;">Household Supplies Total</div>
<svg class="r" style="left:2202px;top:1124px" width="32" height="32"><rect width="32" height="32" rx="4" fill="#67779f"/><path d="M8 16H24M16 8V24" stroke="#eef0f6" stroke-width="4.6"/></svg>
<div class="t" style="left:2345.0px;top:1170px;font-size:22px;line-height:22px;color:#000;letter-spacing:-0.12px;">IGNORED Total</div>
<svg class="r" style="left:2202px;top:1166px" width="32" height="32"><rect width="32" height="32" rx="4" fill="#67779f"/><path d="M8 16H24M16 8V24" stroke="#eef0f6" stroke-width="4.6"/></svg>
<div class="t" style="left:2351.0px;top:1212px;font-size:22px;line-height:22px;color:#000;letter-spacing:1.55px;">Income Total</div>
<svg class="r" style="left:2202px;top:1208px" width="32" height="32"><rect width="32" height="32" rx="4" fill="#67779f"/><path d="M8 16H24M16 8V24" stroke="#eef0f6" stroke-width="4.6"/></svg>
<div class="t" style="left:2338.2px;top:1254px;font-size:22px;line-height:22px;color:#000;letter-spacing:1.29px;">Insurance Total</div>
<svg class="r" style="left:2202px;top:1250px" width="32" height="32"><rect width="32" height="32" rx="4" fill="#67779f"/><path d="M8 16H24M16 8V24" stroke="#eef0f6" stroke-width="4.6"/></svg>
<div class="t" style="left:2262.5px;top:1296px;font-size:22px;line-height:22px;color:#000;letter-spacing:1.04px;">Miscellaneous Spending Total</div>
<svg class="r" style="left:2202px;top:1292px" width="32" height="32"><rect width="32" height="32" rx="4" fill="#67779f"/><path d="M8 16H24M16 8V24" stroke="#eef0f6" stroke-width="4.6"/></svg>
<div class="t" style="left:2317.0px;top:1338px;font-size:22px;line-height:22px;color:#000;letter-spacing:0.93px;">Personal Care Total</div>
<svg class="r" style="left:2202px;top:1334px" width="32" height="32"><rect width="32" height="32" rx="4" fill="#67779f"/><path d="M8 16H24M16 8V24" stroke="#eef0f6" stroke-width="4.6"/></svg>
<div class="t" style="left:2367.8px;top:1380px;font-size:22px;line-height:22px;color:#000;letter-spacing:1.03px;">Rent Total</div>
<svg class="r" style="left:2202px;top:1376px" width="32" height="32"><rect width="32" height="32" rx="4" fill="#67779f"/><path d="M8 16H24M16 8V24" stroke="#eef0f6" stroke-width="4.6"/></svg>
<div class="t" style="left:2281.5px;top:1422px;font-size:22px;line-height:22px;color:#000;letter-spacing:0.77px;">Software &amp; Dev Tools Total</div>
<svg class="r" style="left:2202px;top:1418px" width="32" height="32"><rect width="32" height="32" rx="4" fill="#67779f"/><path d="M8 16H24M16 8V24" stroke="#eef0f6" stroke-width="4.6"/></svg>
<div class="t" style="left:2320.8px;top:1464px;font-size:22px;line-height:22px;color:#000;letter-spacing:1.04px;">Subscriptions Total</div>
<svg class="r" style="left:2202px;top:1460px" width="32" height="32"><rect width="32" height="32" rx="4" fill="#67779f"/><path d="M8 16H24M16 8V24" stroke="#eef0f6" stroke-width="4.6"/></svg>
<div class="t" style="left:2283.1px;top:1506px;font-size:22px;line-height:22px;color:#000;letter-spacing:0.93px;">Takeaway &amp; Delivery Total</div>
<svg class="r" style="left:2202px;top:1502px" width="32" height="32"><rect width="32" height="32" rx="4" fill="#67779f"/><path d="M8 16H24M16 8V24" stroke="#eef0f6" stroke-width="4.6"/></svg>
<div class="t" style="left:2294.3px;top:1548px;font-size:22px;line-height:22px;color:#000;letter-spacing:1.04px;">Tax &amp; Government Total</div>
<svg class="r" style="left:2202px;top:1544px" width="32" height="32"><rect width="32" height="32" rx="4" fill="#67779f"/><path d="M8 16H24M16 8V24" stroke="#eef0f6" stroke-width="4.6"/></svg>
<svg class="r" style="left:92px;top:52px" width="700" height="116" viewBox="0 0 700 116"><text transform="translate(9.6,87.4) scale(0.998,1)" font-family="Liberation Serif, serif" font-weight="bold" font-size="121" fill="#c8aa3f" stroke="#c8aa3f" stroke-width="4.4" stroke-linejoin="round" vector-effect="non-scaling-stroke" style="vector-effect:non-scaling-stroke">b</text><text transform="translate(79.9,87.4) scale(1.250,1)" font-family="Liberation Serif, serif" font-weight="bold" font-size="121" fill="#c8aa3f" stroke="#c8aa3f" stroke-width="4.4" stroke-linejoin="round" vector-effect="non-scaling-stroke" style="vector-effect:non-scaling-stroke">u</text><text transform="translate(153.4,87.4) scale(1.176,1)" font-family="Liberation Serif, serif" font-weight="bold" font-size="121" fill="#c8aa3f" stroke="#c8aa3f" stroke-width="4.4" stroke-linejoin="round" vector-effect="non-scaling-stroke" style="vector-effect:non-scaling-stroke">d</text><text transform="translate(225.2,87.4) scale(1.135,1)" font-family="Liberation Serif, serif" font-weight="bold" font-size="121" fill="#c8aa3f" stroke="#c8aa3f" stroke-width="4.4" stroke-linejoin="round" vector-effect="non-scaling-stroke" style="vector-effect:non-scaling-stroke">g</text><text transform="translate(288.9,87.4) scale(1.286,1)" font-family="Liberation Serif, serif" font-weight="bold" font-size="121" fill="#c8aa3f" stroke="#c8aa3f" stroke-width="4.4" stroke-linejoin="round" vector-effect="non-scaling-stroke" style="vector-effect:non-scaling-stroke">e</text><text transform="translate(353.0,87.4) scale(1.142,1)" font-family="Liberation Serif, serif" font-weight="bold" font-size="121" fill="#c8aa3f" stroke="#c8aa3f" stroke-width="4.4" stroke-linejoin="round" vector-effect="non-scaling-stroke" style="vector-effect:non-scaling-stroke">t</text><text transform="translate(392.0,87.4) scale(1.152,1)" font-family="Liberation Serif, serif" font-weight="bold" font-size="121" fill="#fff" stroke="#fff" stroke-width="4.4" stroke-linejoin="round" vector-effect="non-scaling-stroke" style="vector-effect:non-scaling-stroke">d</text><text transform="translate(461.1,87.4) scale(1.321,1)" font-family="Liberation Serif, serif" font-weight="bold" font-size="121" fill="#fff" stroke="#fff" stroke-width="4.4" stroke-linejoin="round" vector-effect="non-scaling-stroke" style="vector-effect:non-scaling-stroke">o</text><text transform="translate(538.3,87.4) scale(1.117,1)" font-family="Liberation Serif, serif" font-weight="bold" font-size="121" fill="#fff" stroke="#fff" stroke-width="4.4" stroke-linejoin="round" vector-effect="non-scaling-stroke" style="vector-effect:non-scaling-stroke">g</text></svg>
<div class="t" style="left:1463.5px;top:78px;font-size:63px;line-height:63px;color:#fff;letter-spacing:1.05px;">Three Month Lookback Dashboard</div>
<div class="r" style="left:92px;top:50px;width:2594px;height:2.4px;background:#4170dd;"></div>
<div class="r" style="left:92px;top:166.60000000000002px;width:2594px;height:3.4px;background:#4170dd;"></div>
<div class="r" style="left:92px;top:50px;width:2.4px;height:120px;background:#4170dd;"></div>
<div class="r" style="left:2684px;top:2px;width:2px;height:1570px;background:#c4c4c4;"></div>
</div>
<div class="r" style="left:2692px;top:324px;width:22px;height:1516px;background:#fff;"></div>
<div class="r" style="left:2694px;top:326px;width:18px;height:52px;background:#dadada;border-radius:9px;"></div>
<div class="r" style="left:2692px;top:1777px;width:22px;height:2px;background:#c4c4c4;"></div>
<div class="r" style="left:2692px;top:1808px;width:22px;height:2px;background:#c4c4c4;"></div>
<div class="r" style="left:2692px;top:1777px;width:2px;height:63px;background:#c4c4c4;"></div>
<div class="r" style="left:2694px;top:1779px;width:20px;height:29px;background:#f8f9fa;"></div>
<div class="r" style="left:2694px;top:1810px;width:20px;height:30px;background:#f8f9fa;"></div>
<svg class="r" style="left:2696px;top:1787px;" width="14" height="10" viewBox="0 0 14 10"><path d="M1.5 8.5L7 2L12.5 8.5Z" fill="#9e9e9e"/></svg>
<svg class="r" style="left:2696px;top:1821px;" width="14" height="10" viewBox="0 0 14 10"><path d="M1.5 1.5L7 8L12.5 1.5Z" fill="#9e9e9e"/></svg>
<div class="r" style="left:6px;top:1840px;width:2708px;height:2px;background:#c4c4c4;"></div>
<div class="r" style="left:6px;top:1842px;width:2708px;height:24px;background:#fff;"></div>
<div class="r" style="left:6px;top:1842px;width:90px;height:24px;background:#f8f9fa;"></div>
<div class="r" style="left:96px;top:1842px;width:2px;height:24px;background:#c4c4c4;"></div>
<div class="r" style="left:101px;top:1845px;width:510px;height:17px;background:#dadada;border-radius:9px;"></div>
<div class="r" style="left:2629px;top:1842px;width:2px;height:24px;background:#c4c4c4;"></div>
<div class="r" style="left:2660px;top:1842px;width:2px;height:24px;background:#c4c4c4;"></div>
<div class="r" style="left:2690px;top:1842px;width:4px;height:24px;background:#c4c4c4;"></div>
<div class="r" style="left:2631px;top:1842px;width:29px;height:24px;background:#f8f9fa;"></div>
<div class="r" style="left:2662px;top:1842px;width:28px;height:24px;background:#f8f9fa;"></div>
<div class="r" style="left:2694px;top:1842px;width:20px;height:24px;background:#f8f9fa;"></div>
<svg class="r" style="left:2640px;top:1847px;" width="10" height="14" viewBox="0 0 10 14"><path d="M8.5 1.5L2 7L8.5 12.5Z" fill="#9e9e9e"/></svg>
<svg class="r" style="left:2672px;top:1847px;" width="10" height="14" viewBox="0 0 10 14"><path d="M1.5 1.5L8 7L1.5 12.5Z" fill="#9e9e9e"/></svg>
<div class="r" style="left:0px;top:1866px;width:3442px;height:2px;background:#c4c4c4;"></div>
<div class="r" style="left:0px;top:1868px;width:3330px;height:22px;background:#efeded;"></div>
<div class="t" style="left:99.0px;top:1876px;font-size:22px;line-height:22px;color:#5f6368;letter-spacing:-0.01px;">Quotes are not sourced from all markets and may be delayed up to 20 minutes. Information is provided &#x27;as is&#x27; and solely for informational purposes, not for trading purposes or advice.</div>
<div class="t" style="left:1877.2px;top:1876px;font-size:22px;line-height:22px;color:#1a55c4;letter-spacing:0.28px;">Disclaimer</div>
<div class="r" style="left:0px;top:0px;width:4px;height:1890px;background:#dde7ea;"></div>
<div class="r" style="left:4px;top:0px;width:2px;height:1890px;background:#c6d6dd;"></div>
<svg class="r" style="left:49px;top:24px;" width="50" height="68" viewBox="0 0 50 68"><path d="M5 0H32L50 18V63Q50 68 45 68H5Q0 68 0 63V5Q0 0 5 0Z" fill="#4aa654"/><path d="M32 0L50 18H37Q32 18 32 13Z" fill="#3a8543"/><path d="M9 31H41V58H9Z M13.5 35.5V42H22.5V35.5Z M27 35.5V42H36.5V35.5Z M13.5 46.5V53.5H22.5V46.5Z M27 46.5V53.5H36.5V46.5Z" fill="#fff" fill-rule="evenodd"/></svg>
<div class="t" style="left:127.0px;top:20px;font-size:36px;line-height:36px;color:#1f1f1f;letter-spacing:0.42px;">Demo video - 3 month lookback</div>
<div class="t" style="left:127.8px;top:69px;font-size:28px;line-height:28px;color:#1f1f1f;letter-spacing:0.83px;">File</div>
<div class="t" style="left:205.8px;top:69px;font-size:28px;line-height:28px;color:#1f1f1f;letter-spacing:0.92px;">Edit</div>
<div class="t" style="left:289.8px;top:69px;font-size:28px;line-height:28px;color:#1f1f1f;letter-spacing:-0.17px;">View</div>
<div class="t" style="left:380.5px;top:69px;font-size:28px;line-height:28px;color:#1f1f1f;letter-spacing:1.35px;">Insert</div>
<div class="t" style="left:488.8px;top:69px;font-size:28px;line-height:28px;color:#1f1f1f;letter-spacing:0.85px;">Format</div>
<div class="t" style="left:613.8px;top:69px;font-size:28px;line-height:28px;color:#1f1f1f;letter-spacing:0.75px;">Data</div>
<div class="t" style="left:708.5px;top:69px;font-size:28px;line-height:28px;color:#1f1f1f;letter-spacing:0.75px;">Tools</div>
<div class="t" style="left:807.8px;top:69px;font-size:28px;line-height:28px;color:#1f1f1f;letter-spacing:0.47px;">Extensions</div>
<div class="t" style="left:979.8px;top:69px;font-size:28px;line-height:28px;color:#1f1f1f;letter-spacing:1.25px;">Help</div>
<div class="r" style="left:680px;top:19px;width:40px;height:39px;background:#f4bf3d;border-radius:8px;"></div>
<svg class="r" style="left:684.5px;top:22.5px;" width="31" height="31" viewBox="0 0 28 28"><path d="M3 6H13V10H25V24H3Z" fill="#1f1f1f"/><path d="M6 13H9V16H6ZM11 13H14V16H11ZM16 13H19V16H16ZM6 18H9V21H6ZM11 18H14V21H11ZM16 18H19V21H16ZM20 13H22.5V16H20Z" fill="#f4bf3d"/><path d="M2 2L26 26" stroke="#f4bf3d" stroke-width="5"/><path d="M2.5 2.5L25.5 25.5" stroke="#1f1f1f" stroke-width="2.4"/></svg>
<svg class="r" style="left:746.0px;top:21.5px;" width="36" height="36" viewBox="0 0 24 24"><path d="M22 9.24l-7.19-.62L12 2 9.19 8.63 2 9.24l5.46 4.73L5.82 21 12 17.27 18.18 21l-1.63-7.03L22 9.24zM12 15.4l-3.76 2.27 1-4.28-3.32-2.88 4.38-.38L12 6.1l1.71 4.04 4.38.38-3.32 2.88 1 4.28L12 15.4z" fill="#444746" /></svg>
<svg class="r" style="left:811px;top:23px;" width="36" height="32" viewBox="0 0 36 32"><path d="M13 3H21L31 20M21 27H8L3 19L13 3M12.5 21.5L17 13.5L21.5 21.5Z" fill="none" stroke="#444746" stroke-width="2.6" stroke-linejoin="round"/><path d="M23 25H35M29 19V31" stroke="#f9fbfd" stroke-width="7"/><path d="M24 25.5H34M29 20.5V30.5" fill="none" stroke="#444746" stroke-width="2.6" /></svg>
<svg class="r" style="left:873px;top:26px;" width="38" height="28" viewBox="0 0 38 28"><path d="M10 25.5H29Q35.8 25 35.8 18.5Q35.5 12.8 29.5 12Q28 3.2 19 2.5Q12 2.5 9.3 9.5Q2.3 10.5 2.2 17.5Q2.5 25 10 25.5Z" fill="none" stroke="#444746" stroke-width="2.6" /><path d="M13.5 15L17.5 19L25 11.5" fill="none" stroke="#444746" stroke-width="2.6" /></svg>
<svg class="r" style="left:2406.0px;top:28.0px;" width="48" height="48" viewBox="0 0 24 24"><path d="M13 3a9 9 0 0 0-9 9H1l3.89 3.89.07.14L9 12H6c0-3.87 3.13-7 7-7s7 3.13 7 7-3.13 7-7 7c-1.93 0-3.68-.79-4.94-2.06l-1.42 1.42A8.954 8.954 0 0 0 13 21a9 9 0 0 0 0-18zm-1 5v5l4.28 2.54.72-1.21-3.5-2.08V8H12z" fill="#444746" /></svg>
<svg class="r" style="left:2508px;top:33px;" width="42" height="42" viewBox="0 0 42 42"><path d="M5 1.5H36Q40.5 1.5 40.5 6V40.5L32 32.5H5Q1.5 32.5 1.5 28V6Q1.5 1.5 5 1.5Z" fill="none" stroke="#444746" stroke-width="3.4" stroke-linejoin="round"/><path d="M8 9H34M8 15.5H34M8 22H34" stroke="#444746" stroke-width="3.6"/><path d="M32 31L40.5 40.5V30Z" fill="#444746"/></svg>
<svg class="r" style="left:2615px;top:37px;" width="44" height="32" viewBox="0 0 44 32"><path d="M6.5 2H27Q31 2 31 6V26Q31 30 27 30H6Q2 30 2 26V10.5Q2 8.5 3.5 6.5Q5 4.5 6.5 2Z" fill="none" stroke="#444746" stroke-width="3.6" stroke-linejoin="round"/><path d="M31 13L43 4V28L31 19Z" fill="#444746"/></svg>
<svg class="r" style="left:2677px;top:47px;" width="16" height="9" viewBox="0 0 16 9"><path d="M0 0H16L8 9Z" fill="#444746"/></svg>
<div class="r" style="left:2738px;top:12px;width:250px;height:80px;background:#c2e7ff;border-radius:40px;"></div>
<div class="r" style="left:2920px;top:12px;width:2.4px;height:80px;background:#fff;"></div>
<svg class="r" style="left:2773.8px;top:33.8px;" width="36.5" height="36.5" viewBox="0 0 24 24"><path d="M12 2C6.48 2 2 6.48 2 12s4.48 10 10 10 10-4.48 10-10S17.52 2 12 2zm-1 17.93c-3.95-.49-7-3.85-7-7.93 0-.62.08-1.21.21-1.79L9 15v1c0 1.1.9 2 2 2v1.93zm6.9-2.54c-.26-.81-1-1.39-1.9-1.39h-1v-3c0-.55-.45-1-1-1H8v-2h2c.55 0 1-.45 1-1V7h2c1.1 0 2-.9 2-2v-.41c2.93 1.19 5 4.06 5 7.41 0 2.08-.8 3.97-2.1 5.39z" fill="#0a2d57" /></svg>
<div class="t" style="left:2823.8px;top:38px;font-size:29px;line-height:29px;color:#0c3a6a;letter-spacing:0.81px;-webkit-text-stroke:0.7px #0c3a6a;">Share</div>
<svg class="r" style="left:2945px;top:48px;" width="17" height="9.5" viewBox="0 0 17 9.5"><path d="M0 0H17L8.5 9.5Z" fill="#0a2d57"/></svg>
<div class="r" style="left:3004px;top:12px;width:216px;height:80px;background:#d8e2fa;border-radius:40px;"></div>
<div class="t" style="left:3053.8px;top:38px;font-size:29px;line-height:29px;color:#1b3fa6;letter-spacing:0.75px;-webkit-text-stroke:0.7px #1b3fa6;">Upgrade</div>
<svg class="r" style="left:3253px;top:31px;" width="42" height="42" viewBox="0 0 42 42"><path d="M21 0Q22.5 16 42 21Q22.5 26 21 42Q19.5 26 0 21Q19.5 16 21 0Z" fill="#444746"/></svg>
<svg class="r" style="left:3337px;top:19px" width="66" height="66" viewBox="0 0 66 66"><defs><clipPath id="av"><circle cx="33" cy="32.8" r="32"/></clipPath><linearGradient id="fg" x1="0" y1="0" x2="1" y2="0"><stop offset="0" stop-color="#c9c9c9"/><stop offset=".55" stop-color="#bdbdbd"/><stop offset=".85" stop-color="#6a6a6a"/><stop offset="1" stop-color="#151515"/></linearGradient><filter id="bl"><feGaussianBlur stdDeviation="0.7"/></filter></defs><circle cx="33" cy="32.8" r="32" fill="#070707"/><g clip-path="url(#av)"><g filter="url(#bl)"><path d="M18.9 14.5L35.2 14.1Q32 22 31.6 28.6Q31.5 34 32.2 38.2Q34 42 35.8 46Q34.5 52 33.4 56.3L33.4 66L17.5 66L18.9 58.1Q21 53 21.3 49Q16.5 45 15.3 40Q13.2 35 14.1 29.8Q15 28 16.8 29.5Q16.5 20 18.9 14.5Z" fill="url(#fg)"/><path d="M17 27Q18 13 30 11Q40 11 41 15L35.2 14.6Q27 14 20.5 17.5Q18 22 17.8 29Z" fill="#111"/><path d="M19 17Q23 12.5 30 12" stroke="#4a4a4a" stroke-width="1" fill="none"/><path d="M18.3 27.6Q22.5 25.4 27.6 27" stroke="#1a1a1a" stroke-width="1.6" fill="none"/><ellipse cx="24.8" cy="31.4" rx="3.2" ry="2" fill="#1c1c1c"/><path d="M22 33.5Q25 35.5 29 34" stroke="#8a8a8a" stroke-width="1" fill="none"/><path d="M21.5 44.6Q29 43.5 35.8 45.2Q33 51.5 27 49.6Q23.5 48 21.5 44.6Z" fill="#fafafa"/><path d="M21 44.3Q28.5 42.6 36 44.6" stroke="#3a3a3a" stroke-width="1.2" fill="none"/><path d="M23 49.5Q28 53 33.5 50.5" stroke="#777" stroke-width="1.2" fill="none"/><path d="M19 58Q24 63 33 62L33.4 66L17.5 66Z" fill="#e6e6e6"/></g></g></svg>
<div class="r" style="left:38px;top:122px;width:2676px;height:80px;background:#f0f4f9;border-radius:40px;"></div>
<div class="r" style="left:56px;top:134px;width:200px;height:56px;background:#fff;border-radius:28px;"></div>
<svg class="r" style="left:72.0px;top:142.0px;" width="40" height="40" viewBox="0 0 24 24"><path d="M15.5 14h-.79l-.28-.27C15.41 12.59 16 11.11 16 9.5 16 5.91 13.09 3 9.5 3S3 5.91 3 9.5 5.91 16 9.5 16c1.61 0 3.09-.59 4.23-1.57l.27.28v.79l5 4.99L20.49 19l-4.99-5zm-6 0C7.01 14 5 11.99 5 9.5S7.01 5 9.5 5 14 7.01 14 9.5 11.99 14 9.5 14z" fill="#444746" /></svg>
<div class="t" style="left:127.8px;top:148px;font-size:28px;line-height:28px;color:#5a5d5c;letter-spacing:0.56px;">Menus</div>
<svg class="r" style="left:276px;top:153px;" width="28" height="26" viewBox="0 0 28 26"><path d="M9.5 3L3 9.5L9.5 16M3.5 9.5H17.5Q25 9.5 25 16.5Q25 23.5 17.5 23.5H8" fill="none" stroke="#444746" stroke-width="2.8" /></svg>
<svg class="r" style="left:340px;top:153px;" width="28" height="26" viewBox="0 0 28 26"><path d="M18.5 3L25 9.5L18.5 16M24.5 9.5H10.5Q3 9.5 3 16.5Q3 23.5 10.5 23.5H20" fill="none" stroke="#444746" stroke-width="2.8" /></svg>
<svg class="r" style="left:401px;top:149px;" width="34" height="30" viewBox="0 0 34 30"><path d="M8.5 9V2H25.5V9" fill="none" stroke="#444746" stroke-width="2.8" /><path d="M8 22H4.5Q2 22 2 19.5V13.5Q2 9.5 6 9.5H28Q32 9.5 32 13.5V19.5Q32 22 29.5 22H26" fill="none" stroke="#444746" stroke-width="2.8" /><path d="M8.5 17.5H25.5V28H8.5Z" fill="none" stroke="#444746" stroke-width="2.8" /><circle cx="26.5" cy="14" r="1.7" fill="#444746"/></svg>
<svg class="r" style="left:465px;top:148px;" width="30" height="35" viewBox="0 0 30 35"><path d="M3 2.5H22Q24 2.5 24 4.5V7.5Q24 9.5 22 9.5H3Q1.5 9.5 1.5 8V4Q1.5 2.5 3 2.5Z" fill="none" stroke="#444746" stroke-width="2.8" /><path d="M24 6H27Q28.5 6 28.5 7.5V13Q28.5 15 26.5 15H17Q15.5 15 15.5 16.5V21" fill="none" stroke="#444746" stroke-width="2.8" /><path d="M13.5 21.5H17.5Q18.5 21.5 18.5 22.5V32Q18.5 33 17.5 33H13.5Q12.5 33 12.5 32V22.5Q12.5 21.5 13.5 21.5Z" fill="none" stroke="#444746" stroke-width="2.6" /></svg>
<div class="t" style="left:531.0px;top:151px;font-size:28px;line-height:28px;color:#444746;letter-spacing:1.08px;">100%</div>
<svg class="r" style="left:632px;top:159px;" width="16" height="8" viewBox="0 0 16 8"><path d="M0 0H16L8 8Z" fill="#444746"/></svg>
<div class="r" style="left:674px;top:143px;width:2px;height:39px;background:#c7c7c7;"></div>
<div class="t" style="left:706.2px;top:150px;font-size:28px;line-height:28px;color:#444746;">$</div>
<div class="t" style="left:765.5px;top:150px;font-size:28px;line-height:28px;color:#444746;">%</div>
<div class="t" style="left:823.5px;top:147px;font-size:23px;line-height:23px;color:#444746;letter-spacing:1.20px;font-weight:bold;">.0</div>
<svg class="r" style="left:841px;top:169px;" width="18" height="11" viewBox="0 0 18 11"><path d="M6 1L1.5 5.5L6 10M2 5.5H17" fill="none" stroke="#444746" stroke-width="2.5" /></svg>
<div class="t" style="left:887.5px;top:147px;font-size:23px;line-height:23px;color:#444746;letter-spacing:1.20px;font-weight:bold;">.00</div>
<svg class="r" style="left:905px;top:169px;" width="18" height="11" viewBox="0 0 18 11"><path d="M12 1L16.5 5.5L12 10M16 5.5H1" fill="none" stroke="#444746" stroke-width="2.5" /></svg>
<div class="t" style="left:952.2px;top:150px;font-size:23px;line-height:23px;color:#444746;letter-spacing:-0.25px;">123</div>
<div class="r" style="left:1012px;top:143px;width:2px;height:39px;background:#c7c7c7;"></div>
<div class="t" style="left:1042.8px;top:147px;font-size:28px;line-height:28px;color:#444746;letter-spacing:0.83px;">Poppins</div>
<svg class="r" style="left:1177px;top:159px;" width="16" height="8" viewBox="0 0 16 8"><path d="M0 0H16L8 8Z" fill="#444746"/></svg>
<div class="r" style="left:1224px;top:143px;width:2px;height:39px;background:#c7c7c7;"></div>
<div class="r" style="left:1246px;top:160.3px;width:21px;height:2.6px;background:#444746;"></div>
<div class="r" style="left:1288px;top:138px;width:68px;height:48px;background:transparent;border:2px solid #747775;border-radius:9px;box-sizing:border-box;"></div>
<div class="t" style="left:1305.8px;top:150px;font-size:27px;line-height:27px;color:#444746;letter-spacing:1.20px;">23</div>
<div class="r" style="left:1374.5px;top:160.7px;width:21px;height:2.6px;background:#444746;"></div>
<div class="r" style="left:1383.7px;top:151.5px;width:2.6px;height:21px;background:#444746;"></div>
<div class="r" style="left:1418px;top:143px;width:2px;height:39px;background:#c7c7c7;"></div>
<svg class="r" style="left:1437.3px;top:144.7px;" width="40" height="40" viewBox="0 0 24 24"><path d="M15.6 10.79c.97-.67 1.65-1.77 1.65-2.79 0-2.26-1.75-4-4-4H7v14h7.04c2.09 0 3.71-1.7 3.71-3.79 0-1.52-.86-2.82-2.15-3.42zM10 6.5h3c.83 0 1.5.67 1.5 1.5s-.67 1.5-1.5 1.5h-3v-3zm3.5 9H10v-3h3.5c.83 0 1.5.67 1.5 1.5s-.67 1.5-1.5 1.5z" fill="#444746" /></svg>
<svg class="r" style="left:1502.5px;top:144.7px;" width="40" height="40" viewBox="0 0 24 24"><path d="M10 4v3h2.21l-3.42 8H6v3h8v-3h-2.21l3.42-8H18V4z" fill="#444746" /></svg>
<svg class="r" style="left:1570px;top:148px;" width="32" height="32" viewBox="0 0 32 32"><path d="M0 14.8H32" stroke="#444746" stroke-width="2.6"/><path d="M22.5 10Q22 4.5 16 4.5Q9.8 4.7 9.6 9.5Q9.6 11.5 11 12.8" fill="none" stroke="#444746" stroke-width="3" /><path d="M9.2 21.5Q10 27.5 16.2 27.5Q22.8 27.3 23 22Q23 19.5 21 18" fill="none" stroke="#444746" stroke-width="3" /></svg>
<div class="t" style="left:1641.9px;top:146px;font-size:26px;line-height:26px;color:#444746;">A</div>
<div class="r" style="left:1629px;top:174px;width:46px;height:8px;background:#fff;"></div>
<div class="r" style="left:1692px;top:143px;width:2px;height:39px;background:#c7c7c7;"></div>
<svg class="r" style="left:1717px;top:140px;" width="32" height="30" viewBox="0 0 32 30"><path d="M9.5 2L11.5 0L25 13.5L15 23.5Q13.5 25 12 23.5L3.5 15Q2 13.5 3.5 12L12 3.5ZM13.5 6.5L6 14H21Z" fill="#444746" fill-rule="evenodd"/><path d="M27.5 17Q31 21.5 31 23.5A3.5 3.5 0 0 1 24 23.5Q24 21.5 27.5 17Z" fill="#444746"/></svg>
<div class="r" style="left:1711px;top:174px;width:46px;height:8px;background:#000;"></div>
<svg class="r" style="left:1787px;top:150px;" width="28" height="28" viewBox="0 0 28 28"><path d="M1.5 1.5H26.5V26.5H1.5ZM14 1.5V26.5M1.5 14H26.5" fill="none" stroke="#444746" stroke-width="3" /></svg>
<div class="r" style="left:1838px;top:132px;width:60px;height:60px;background:#d3e3fd;border-radius:9px 0 0 9px;"></div>
<svg class="r" style="left:1852px;top:150px;" width="33" height="28" viewBox="0 0 33 28"><path d="M9 1.5H2V8.5M2 19.5V26.5H9M24 1.5H31V8.5M31 19.5V26.5H24" fill="none" stroke="#041e49" stroke-width="2.8" /><path d="M0.5 14H12M8 9.5L12.5 14L8 18.5M32.5 14H21M25 9.5L20.5 14L25 18.5" fill="none" stroke="#041e49" stroke-width="2.8" /></svg>
<svg class="r" style="left:1902px;top:159px;" width="16" height="8" viewBox="0 0 16 8"><path d="M0 0H16L8 8Z" fill="#444746"/></svg>
<div class="r" style="left:1930px;top:143px;width:2px;height:39px;background:#c7c7c7;"></div>
<svg class="r" style="left:1952px;top:150px;" width="28" height="28" viewBox="0 0 28 28"><path d="M0 2H28M5.5 10H22.5M0 18H28M5.5 26H22.5" stroke="#444746" stroke-width="2.8"/></svg>
<svg class="r" style="left:1994px;top:159px;" width="16" height="8" viewBox="0 0 16 8"><path d="M0 0H16L8 8Z" fill="#444746"/></svg>
<svg class="r" style="left:2035px;top:148px;" width="26" height="32" viewBox="0 0 26 32"><path d="M0 16H26" stroke="#444746" stroke-width="2.8"/><path d="M13 0V11M8 6.5L13 11.5L18 6.5M13 32V21M8 25.5L13 20.5L18 25.5" fill="none" stroke="#444746" stroke-width="2.8" /></svg>
<svg class="r" style="left:2076px;top:159px;" width="16" height="8" viewBox="0 0 16 8"><path d="M0 0H16L8 8Z" fill="#444746"/></svg>
<svg class="r" style="left:2117px;top:151px;" width="27" height="26" viewBox="0 0 27 26"><path d="M2 0V26M12.5 0V7M12.5 19V26M8 13H25M20 8L25 13L20 18" fill="none" stroke="#444746" stroke-width="2.8" /></svg>
<svg class="r" style="left:2158px;top:159px;" width="16" height="8" viewBox="0 0 16 8"><path d="M0 0H16L8 8Z" fill="#444746"/></svg>
<svg class="r" style="left:2198px;top:148px;" width="30" height="32" viewBox="0 0 30 32"><text x="12" y="20" font-family="Liberation Sans, sans-serif" font-size="26" text-anchor="middle" fill="#444746">A</text><path d="M1 26.5H27M22.5 22L27.5 26.5L22.5 31" fill="none" stroke="#444746" stroke-width="2.6" /></svg>
<svg class="r" style="left:2240px;top:159px;" width="16" height="8" viewBox="0 0 16 8"><path d="M0 0H16L8 8Z" fill="#444746"/></svg>
<div class="r" style="left:2272px;top:143px;width:2px;height:39px;background:#c7c7c7;"></div>
<div class="r" style="left:2309.6px;top:153.1px;width:5.8px;height:5.8px;background:#444746;border-radius:50%;"></div>
<div class="r" style="left:2309.6px;top:161.1px;width:5.8px;height:5.8px;background:#444746;border-radius:50%;"></div>
<div class="r" style="left:2309.6px;top:169.1px;width:5.8px;height:5.8px;background:#444746;border-radius:50%;"></div>
<svg class="r" style="left:2646px;top:158px;" width="24" height="14" viewBox="0 0 24 14"><path d="M1.5 12.5L12 2L22.5 12.5" fill="none" stroke="#444746" stroke-width="2.8" /></svg>
<div class="t" style="left:35.0px;top:234px;font-size:24px;line-height:24px;color:#1f1f1f;letter-spacing:-1.38px;">A1:Q1</div>
<svg class="r" style="left:178px;top:242px;" width="16" height="8" viewBox="0 0 16 8"><path d="M0 0H16L8 8Z" fill="#444746"/></svg>
<div class="r" style="left:218px;top:230px;width:2px;height:33px;background:#c7c7c7;"></div>
<div class="t" style="left:241.0px;top:231px;font-size:29px;line-height:29px;color:#929292;letter-spacing:1.20px;font-weight:bold;font-style:italic;font-family:'Liberation Serif', serif;">fx</div>
<div class="t" style="left:288.5px;top:232px;font-size:25px;line-height:25px;color:#1f1f1f;letter-spacing:-0.27px;">Three Month Lookback Dashboard</div>
<div class="r" style="left:2746px;top:122px;width:664px;height:1744px;background:#f0f4f9;border-radius:32px 32px 0 0;"></div>
<div class="t" style="left:2778.7px;top:162px;font-size:32px;line-height:32px;color:#444746;letter-spacing:0.94px;-webkit-text-stroke:0.5px #444746;">Avery</div>
<svg class="r" style="left:3339px;top:164px;" width="30" height="29" viewBox="0 0 30 29"><path d="M2 1.5L28 27.5M28 1.5L2 27.5" fill="none" stroke="#444746" stroke-width="3.6" /></svg>
<div class="r" style="left:2778px;top:234px;width:600px;height:1632px;background:#edf1f9;border-radius:24px 24px 0 0;"></div>
<div class="t" style="left:2806.2px;top:262px;font-size:33px;line-height:33px;color:#0f2a2d;letter-spacing:-0.06px;font-weight:bold;">Avery</div>
<svg class="r" style="left:2801px;top:279px;" width="30" height="8" viewBox="0 0 30 8"><path d="M0 6Q12 2.5 27 0.5L28 3.5Q14 5.5 1 8Z" fill="#0f2a2d"/></svg>
<svg class="r" style="left:3297px;top:258.5px;" width="46" height="46" viewBox="0 0 46 46"><defs><clipPath id="uc"><circle cx="23" cy="23" r="19.5"/></clipPath></defs><circle cx="23" cy="23" r="20" fill="none" stroke="#000" stroke-width="3.6"/><circle cx="23" cy="18.5" r="7.2" fill="none" stroke="#000" stroke-width="3.4"/><path d="M8 40Q10 30.5 23 30.5Q36 30.5 38 40" fill="none" stroke="#000" stroke-width="3.4" clip-path="url(#uc)"/></svg>
<div class="r" style="left:2794px;top:314px;width:568px;height:962px;background:linear-gradient(180deg,#d8c585 0%,#d3be78 30%,#c9b264 65%,#c2a856 100%);border-radius:20px;"></div>
<div class="r" style="left:2826px;top:345.5px;width:504px;height:8.5px;background:#b3a266;border-radius:4.5px;"></div>
<div class="r" style="left:2826px;top:345.5px;width:358px;height:8.5px;background:#6f6239;border-radius:4.5px 0 0 4.5px;"></div>
<div class="r" style="left:2826px;top:402px;width:64px;height:64px;background:transparent;border:3.9px solid #333;border-radius:50%;box-sizing:border-box;"></div>
<svg class="r" style="left:2846px;top:423px;" width="24" height="22" viewBox="0 0 24 22"><path d="M10.5 2L1.8 11L10.5 20M2.5 11H23" fill="none" stroke="#333" stroke-width="3" /></svg>
<div class="r" style="left:3196px;top:405px;width:137px;height:58px;background:rgba(110,85,10,0.12);border-radius:10px;"></div>
<div class="t" style="left:3219.8px;top:420px;font-size:28px;line-height:28px;color:#333;letter-spacing:-0.42px;-webkit-text-stroke:0.6px #333;">Skip</div>
<svg class="r" style="left:3286px;top:423px;" width="24" height="22" viewBox="0 0 24 22"><path d="M13.5 2L22.2 11L13.5 20M21.5 11H1" fill="none" stroke="#333" stroke-width="3" /></svg>
<div class="t" style="left:2826.3px;top:504px;font-size:50px;line-height:50px;color:#333;letter-spacing:-2.19px;font-weight:bold;">Analyze your spending</div>
<div class="t" style="left:2826.2px;top:608px;font-size:29px;line-height:29px;color:#333;letter-spacing:1.12px;-webkit-text-stroke:0.3px #333;">On the left hand side you can see</div>
<div class="t" style="left:2827.5px;top:650px;font-size:29px;line-height:29px;color:#333;letter-spacing:1.60px;-webkit-text-stroke:0.3px #333;">your average spend each month</div>
<div class="t" style="left:2825.8px;top:692px;font-size:29px;line-height:29px;color:#333;letter-spacing:1.51px;-webkit-text-stroke:0.3px #333;">broken down by category</div>
<div class="t" style="left:2826.2px;top:778px;font-size:29px;line-height:29px;color:#333;letter-spacing:1.18px;-webkit-text-stroke:0.3px #333;">On the right hand side you can see</div>
<div class="t" style="left:2826.2px;top:820px;font-size:29px;line-height:29px;color:#333;letter-spacing:1.54px;-webkit-text-stroke:0.3px #333;">a chart that shows each</div>
<div class="t" style="left:2827.0px;top:861px;font-size:29px;line-height:29px;color:#333;letter-spacing:1.53px;-webkit-text-stroke:0.3px #333;">transaction in a category</div>
<div class="r" style="left:2826px;top:930px;width:504px;height:128px;background:#fff;border-radius:20px;"></div>
<div class="t" style="left:2856.5px;top:978px;font-size:32px;line-height:32px;color:#333;letter-spacing:0.25px;">Continue</div>
<div class="r" style="left:3234px;top:962px;width:64px;height:64px;background:#333;border-radius:50%;"></div>
<svg class="r" style="left:3253px;top:983px;" width="26" height="22" viewBox="0 0 26 22"><path d="M14.5 2L23.5 11L14.5 20M23 11H1" fill="none" stroke="#fff" stroke-width="3" /></svg>
<div class="r" style="left:2826px;top:1122px;width:504px;height:90px;background:#c2a856;border-radius:20px;"></div>
<div class="t" style="left:2966.0px;top:1152px;font-size:30px;line-height:30px;color:#333;letter-spacing:1.07px;-webkit-text-stroke:0.8px #333;">Exit onboarding</div>
<div class="r" style="left:2794px;top:1856.5px;width:159px;height:12px;background:#fff;border-radius:10px 10px 0 0;"></div>
<div class="r" style="left:0px;top:1866px;width:3442px;height:2px;background:#c4c4c4;"></div>
<div class="r" style="left:3330px;top:1868px;width:112px;height:22px;background:#f9fbfd;"></div>
</div>
</body></html>
